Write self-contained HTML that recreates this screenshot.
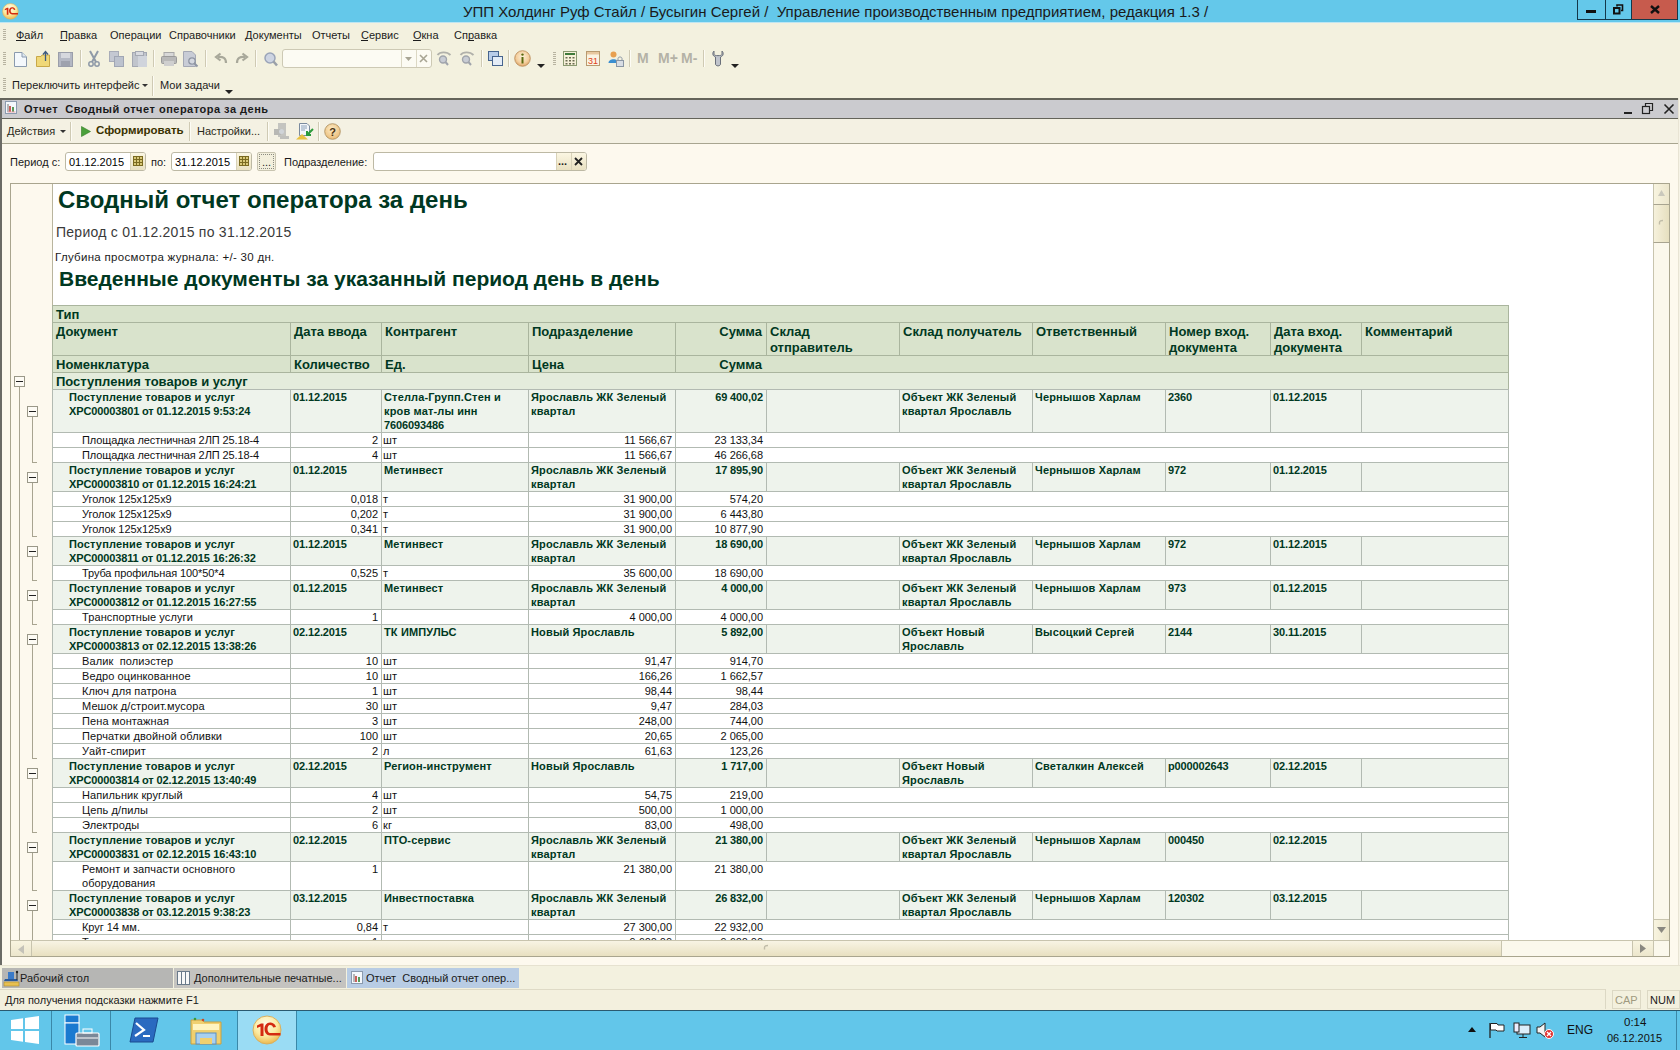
<!DOCTYPE html><html><head><meta charset="utf-8"><style>
html,body{margin:0;padding:0;width:1680px;height:1050px;overflow:hidden;background:#f3f1df;}
body{position:relative;font-family:"Liberation Sans",sans-serif;}
div{position:absolute;box-sizing:border-box;}
.t{white-space:pre;}
svg{position:absolute;overflow:visible}
</style></head><body>
<div style="left:0px;top:0px;width:1680px;height:23px;background:#64c8ea;"></div>
<div style="left:0px;top:22px;width:1680px;height:1px;background:#bfe6f2;"></div>
<div style="left:463px;top:2px;font-size:15px;line-height:19px;color:#1a1a1a;white-space:pre;">УПП Холдинг Руф Стайл / Бусыгин Сергей /  Управление производственным предприятием, редакция 1.3 /</div>
<svg style="left:2px;top:3px" width="16.8" height="16.8" viewBox="0 0 30 30"><defs><radialGradient id="lg1" cx="0.45" cy="0.3" r="0.75"><stop offset="0" stop-color="#fffce8"/><stop offset="0.55" stop-color="#fbeaa0"/><stop offset="1" stop-color="#eab040"/></radialGradient></defs><circle cx="15" cy="15" r="14" fill="url(#lg1)" stroke="#d8b060" stroke-width="1"/><path d="M5 10.5 L9 8.5 H11.5 V21 H8.5 V11.5 L5 13 Z" fill="#d42a10"/><path d="M24 12 C23 8.5 20 7.5 18 7.5 C14.5 7.5 12.5 10.5 12.5 14 C12.5 17.5 14.5 20.5 18 20.5 H28.5 V18 H18 C16.5 18 15.5 16 15.5 14 C15.5 12 16.5 10 18 10 C19.5 10 20.8 10.8 21.2 12.5 Z" fill="#d42a10"/></svg>
<div style="left:1577px;top:0px;width:101px;height:20px;background:#64c8ea;border:1px solid #14384a;border-top:none;"></div>
<div style="left:1632px;top:0px;width:45px;height:19px;background:#c75b4d;"></div>
<div style="left:1605px;top:0px;width:1px;height:19px;background:#14384a;"></div>
<div style="left:1631px;top:0px;width:1px;height:19px;background:#14384a;"></div>
<div style="left:1586px;top:10px;width:10px;height:3px;background:#111;"></div>
<svg style="left:1613px;top:4px" width="11" height="11"><rect x="1" y="4" width="5.5" height="5.5" fill="none" stroke="#111" stroke-width="2"/><path d="M4 2.5 V1 H9.5 V6.5 H8" fill="none" stroke="#111" stroke-width="1.6"/></svg>
<svg style="left:1650px;top:5px" width="10" height="9"><path d="M1 1 L9 8 M9 1 L1 8" stroke="#111" stroke-width="2.4"/></svg>
<div style="left:0px;top:23px;width:1680px;height:76px;background:#f3f1df;"></div>
<div style="left:3px;top:29px;width:3px;height:1px;background:#b7b3a0;"></div>
<div style="left:3px;top:31px;width:3px;height:1px;background:#b7b3a0;"></div>
<div style="left:3px;top:33px;width:3px;height:1px;background:#b7b3a0;"></div>
<div style="left:3px;top:35px;width:3px;height:1px;background:#b7b3a0;"></div>
<div style="left:3px;top:37px;width:3px;height:1px;background:#b7b3a0;"></div>
<div style="left:3px;top:39px;width:3px;height:1px;background:#b7b3a0;"></div>
<div style="left:3px;top:52px;width:3px;height:1px;background:#b7b3a0;"></div>
<div style="left:3px;top:54px;width:3px;height:1px;background:#b7b3a0;"></div>
<div style="left:3px;top:56px;width:3px;height:1px;background:#b7b3a0;"></div>
<div style="left:3px;top:58px;width:3px;height:1px;background:#b7b3a0;"></div>
<div style="left:3px;top:60px;width:3px;height:1px;background:#b7b3a0;"></div>
<div style="left:3px;top:62px;width:3px;height:1px;background:#b7b3a0;"></div>
<div style="left:3px;top:64px;width:3px;height:1px;background:#b7b3a0;"></div>
<div style="left:3px;top:78px;width:3px;height:1px;background:#b7b3a0;"></div>
<div style="left:3px;top:80px;width:3px;height:1px;background:#b7b3a0;"></div>
<div style="left:3px;top:82px;width:3px;height:1px;background:#b7b3a0;"></div>
<div style="left:3px;top:84px;width:3px;height:1px;background:#b7b3a0;"></div>
<div style="left:3px;top:86px;width:3px;height:1px;background:#b7b3a0;"></div>
<div style="left:3px;top:88px;width:3px;height:1px;background:#b7b3a0;"></div>
<div style="left:3px;top:90px;width:3px;height:1px;background:#b7b3a0;"></div>
<div class="t" style="left:16px;top:28px;font-size:11px;line-height:14px;color:#1c1c1c;font-weight:normal;text-align:left;">Файл</div>
<div class="t" style="left:60px;top:28px;font-size:11px;line-height:14px;color:#1c1c1c;font-weight:normal;text-align:left;">Правка</div>
<div class="t" style="left:110px;top:28px;font-size:11px;line-height:14px;color:#1c1c1c;font-weight:normal;text-align:left;">Операции</div>
<div class="t" style="left:169px;top:28px;font-size:11px;line-height:14px;color:#1c1c1c;font-weight:normal;text-align:left;">Справочники</div>
<div class="t" style="left:245px;top:28px;font-size:11px;line-height:14px;color:#1c1c1c;font-weight:normal;text-align:left;">Документы</div>
<div class="t" style="left:312px;top:28px;font-size:11px;line-height:14px;color:#1c1c1c;font-weight:normal;text-align:left;">Отчеты</div>
<div class="t" style="left:361px;top:28px;font-size:11px;line-height:14px;color:#1c1c1c;font-weight:normal;text-align:left;">Сервис</div>
<div class="t" style="left:413px;top:28px;font-size:11px;line-height:14px;color:#1c1c1c;font-weight:normal;text-align:left;">Окна</div>
<div class="t" style="left:454px;top:28px;font-size:11px;line-height:14px;color:#1c1c1c;font-weight:normal;text-align:left;">Справка</div>
<div style="left:16px;top:40px;width:10px;height:1px;background:#1c1c1c;"></div>
<div style="left:60px;top:40px;width:7px;height:1px;background:#1c1c1c;"></div>
<div style="left:361px;top:40px;width:7px;height:1px;background:#1c1c1c;"></div>
<div style="left:413px;top:40px;width:8px;height:1px;background:#1c1c1c;"></div>
<div style="left:468px;top:40px;width:6px;height:1px;background:#1c1c1c;"></div>
<svg style="left:14px;top:52px" width="13" height="15"><path d="M0.5 0.5 H8 L12.5 5 V14.5 H0.5 Z" fill="#f4f8fc" stroke="#8a9aae"/><path d="M8 0.5 V5 H12.5" fill="#dfe8f2" stroke="#8a9aae"/></svg>
<svg style="left:36px;top:50px" width="15" height="17"><path d="M0.5 6.5 H5 L6 5 H13.5 V16.5 H0.5 Z" fill="#f0d878" stroke="#c8a848"/><path d="M9.5 11 V2 M7 4.5 L9.5 1.5 L12 4.5" stroke="#3d5a80" stroke-width="1.3" fill="none"/></svg>
<svg style="left:58px;top:52px" width="15" height="15"><rect x="0.5" y="0.5" width="14" height="14" fill="#b4b8c4" stroke="#9a9eaa"/><rect x="3" y="1" width="9" height="5" fill="#d6d8de"/><rect x="3" y="9" width="9" height="5" fill="#9ea2ae"/></svg>
<div style="left:80px;top:50px;width:1px;height:17px;background:#cfcab4;"></div>
<div style="left:81px;top:50px;width:1px;height:17px;background:#fdfcf5;"></div>
<svg style="left:88px;top:51px" width="12" height="16"><path d="M2 0 L8 11 M10 0 L4 11" stroke="#8f9aa8" stroke-width="2"/><circle cx="3" cy="13" r="2.2" fill="none" stroke="#8f9aa8" stroke-width="1.5"/><circle cx="9" cy="13" r="2.2" fill="none" stroke="#8f9aa8" stroke-width="1.5"/></svg>
<svg style="left:109px;top:51px" width="16" height="16"><rect x="0.5" y="0.5" width="9" height="10" fill="#c4c8d2" stroke="#a8acb8"/><rect x="5.5" y="5.5" width="9" height="10" fill="#bcc2ce" stroke="#a0a6b4"/></svg>
<svg style="left:132px;top:51px" width="16" height="16"><rect x="0.5" y="1.5" width="14" height="14" fill="#c0c4cc" stroke="#a4a8b2"/><rect x="3.5" y="0.5" width="8" height="4" fill="#d8dae0" stroke="#a4a8b2"/><rect x="6" y="5" width="9" height="11" fill="#d0d4dc"/></svg>
<div style="left:153px;top:50px;width:1px;height:17px;background:#cfcab4;"></div>
<div style="left:154px;top:50px;width:1px;height:17px;background:#fdfcf5;"></div>
<svg style="left:161px;top:52px" width="16" height="14"><rect x="3" y="0.5" width="10" height="5" fill="#d8d8d8" stroke="#a8a8a8"/><rect x="0.5" y="4.5" width="15" height="7" rx="1" fill="#b8b8b8" stroke="#9a9a9a"/><rect x="3" y="9" width="10" height="5" fill="#cfcfcf"/></svg>
<svg style="left:183px;top:51px" width="16" height="16"><path d="M0.5 0.5 H9 L12.5 4 V15.5 H0.5 Z" fill="#c8ccd6" stroke="#a4a8b4"/><circle cx="9" cy="10" r="3.2" fill="#d4d8e0" stroke="#8f96a4" stroke-width="1.3"/><path d="M11 12 L14.5 15.5" stroke="#8f96a4" stroke-width="2"/></svg>
<div style="left:205px;top:50px;width:1px;height:17px;background:#cfcab4;"></div>
<div style="left:206px;top:50px;width:1px;height:17px;background:#fdfcf5;"></div>
<svg style="left:215px;top:53px" width="12" height="11"><path d="M11 10 C11 5 8 3.5 3 4 M5.5 0.5 L1 4 L5.5 7.5" stroke="#a8a89a" stroke-width="2.2" fill="none"/></svg>
<svg style="left:236px;top:53px" width="12" height="11"><path d="M1 10 C1 5 4 3.5 9 4 M6.5 0.5 L11 4 L6.5 7.5" stroke="#a8a89a" stroke-width="2.2" fill="none"/></svg>
<div style="left:255px;top:50px;width:1px;height:17px;background:#cfcab4;"></div>
<div style="left:256px;top:50px;width:1px;height:17px;background:#fdfcf5;"></div>
<svg style="left:264px;top:52px" width="14" height="15"><circle cx="6" cy="6" r="5" fill="#cdd4e2" stroke="#9aa4b8" stroke-width="1.5"/><path d="M9.5 9.5 L13 13.5" stroke="#9aa0a8" stroke-width="2.5"/></svg>
<div style="left:282px;top:49px;width:150px;height:19px;background:#fcfbf3;border:1px solid #cdc9b4;border-radius:3px;"></div>
<div style="left:401px;top:50px;width:1px;height:17px;background:#dcd8c4;"></div>
<div style="left:416px;top:50px;width:1px;height:17px;background:#dcd8c4;"></div>
<svg style="left:405px;top:57px" width="8" height="4"><path d="M0 0 H7 L3.5 4 Z" fill="#a8a594"/></svg>
<svg style="left:419px;top:54px" width="9" height="9"><path d="M1 1 L8 8 M8 1 L1 8" stroke="#a8a594" stroke-width="1.6"/></svg>
<svg style="left:436px;top:51px" width="16" height="16"><path d="M1.5 4 C4 0.5 11 0.5 14.5 4" stroke="#b0b0aa" stroke-width="1.8" fill="none"/><circle cx="7" cy="8.5" r="3.5" fill="#c8ccd4" stroke="#a0a4ac" stroke-width="1.4"/><path d="M9.5 11 L12 14" stroke="#a0a4ac" stroke-width="2"/></svg>
<svg style="left:459px;top:51px" width="16" height="16"><path d="M1.5 4 C4 0.5 11 0.5 14.5 4" stroke="#b0b0aa" stroke-width="1.8" fill="none"/><circle cx="7" cy="8.5" r="3.5" fill="#c8ccd4" stroke="#a0a4ac" stroke-width="1.4"/><path d="M9.5 11 L12 14" stroke="#a0a4ac" stroke-width="2"/></svg>
<div style="left:481px;top:50px;width:1px;height:17px;background:#cfcab4;"></div>
<div style="left:482px;top:50px;width:1px;height:17px;background:#fdfcf5;"></div>
<svg style="left:488px;top:51px" width="15" height="15"><rect x="0.5" y="0.5" width="10" height="9" fill="#b8cce8" stroke="#46648e"/><rect x="4.5" y="5.5" width="10" height="9" fill="#e4ecf6" stroke="#46648e"/></svg>
<div style="left:508px;top:50px;width:1px;height:17px;background:#cfcab4;"></div>
<div style="left:509px;top:50px;width:1px;height:17px;background:#fdfcf5;"></div>
<svg style="left:514px;top:50px" width="17" height="17"><defs><radialGradient id="ig" cx="0.5" cy="0.4" r="0.65"><stop offset="0" stop-color="#fbf0d8"/><stop offset="0.6" stop-color="#f4d0a0"/><stop offset="1" stop-color="#d89a58"/></radialGradient></defs><circle cx="8.5" cy="8.5" r="7.8" fill="url(#ig)" stroke="#b88a58" stroke-width="0.8"/><rect x="7.5" y="7" width="2" height="6.5" fill="#5a6a10"/><circle cx="8.5" cy="4.6" r="1.2" fill="#5a6a10"/></svg>
<svg style="left:537px;top:64px" width="8" height="4"><path d="M0 0 H8 L4 4 Z" fill="#222"/></svg>
<div style="left:553px;top:52px;width:3px;height:1px;background:#b7b3a0;"></div>
<div style="left:553px;top:54px;width:3px;height:1px;background:#b7b3a0;"></div>
<div style="left:553px;top:56px;width:3px;height:1px;background:#b7b3a0;"></div>
<div style="left:553px;top:58px;width:3px;height:1px;background:#b7b3a0;"></div>
<div style="left:553px;top:60px;width:3px;height:1px;background:#b7b3a0;"></div>
<div style="left:553px;top:62px;width:3px;height:1px;background:#b7b3a0;"></div>
<div style="left:553px;top:64px;width:3px;height:1px;background:#b7b3a0;"></div>
<svg style="left:563px;top:51px" width="14" height="15"><rect x="0.5" y="0.5" width="13" height="14" fill="#f6f0d8" stroke="#8a9a70"/><rect x="2" y="2" width="10" height="2" fill="#3f7a3a"/><g fill="#6a6a50"><rect x="2.5" y="6" width="2" height="1.5"/><rect x="6" y="6" width="2" height="1.5"/><rect x="9.5" y="6" width="2" height="1.5"/><rect x="2.5" y="9" width="2" height="1.5"/><rect x="6" y="9" width="2" height="1.5"/><rect x="9.5" y="9" width="2" height="1.5"/><rect x="2.5" y="12" width="2" height="1.5"/><rect x="6" y="12" width="2" height="1.5"/><rect x="9.5" y="12" width="2" height="1.5"/></g></svg>
<svg style="left:586px;top:51px" width="14" height="15"><rect x="0.5" y="0.5" width="13" height="14" fill="#faf4e4" stroke="#b89a70"/><rect x="1" y="1" width="12" height="2.5" fill="#e8c8a0"/><text x="2" y="13" font-family="Liberation Sans" font-size="9" fill="#e04020">31</text></svg>
<svg style="left:608px;top:51px" width="16" height="16"><circle cx="5.5" cy="3.5" r="3" fill="#e8a050"/><path d="M0.5 12 C0.5 7 10.5 7 10.5 12 Z" fill="#3a8ed0"/><rect x="8.5" y="9.5" width="7" height="6" fill="#d8dde4" stroke="#8a96a4"/><path d="M10 9.5 V7.5 C10 5.5 14 5.5 14 7.5 V9.5" stroke="#8a96a4" fill="none"/></svg>
<div style="left:629px;top:50px;width:1px;height:17px;background:#cfcab4;"></div>
<div style="left:630px;top:50px;width:1px;height:17px;background:#fdfcf5;"></div>
<div class="t" style="left:637px;top:50px;font-size:14px;line-height:17px;font-weight:bold;color:#b4b2a6;">M</div>
<div class="t" style="left:658px;top:50px;font-size:14px;line-height:17px;font-weight:bold;color:#b4b2a6;">M+</div>
<div class="t" style="left:681px;top:50px;font-size:14px;line-height:17px;font-weight:bold;color:#b4b2a6;">M-</div>
<div style="left:703px;top:50px;width:1px;height:17px;background:#cfcab4;"></div>
<div style="left:704px;top:50px;width:1px;height:17px;background:#fdfcf5;"></div>
<svg style="left:712px;top:50px" width="12" height="17"><path d="M2 1 C0 3 0.5 6 3.5 7 V14 C3.5 16.5 8.5 16.5 8.5 14 V7 C11.5 6 12 3 10 1 V4.5 C10 6 2 6 2 4.5 Z" fill="#c0c4cc" stroke="#6a707a"/></svg>
<svg style="left:731px;top:64px" width="8" height="4"><path d="M0 0 H8 L4 4 Z" fill="#222"/></svg>
<div class="t" style="left:12px;top:78px;font-size:11px;line-height:14px;color:#1c1c1c;font-weight:normal;text-align:left;">Переключить интерфейс</div>
<svg style="left:142px;top:84px" width="6" height="3"><path d="M0 0 H6 L3 3 Z" fill="#333"/></svg>
<div style="left:152px;top:76px;width:1px;height:20px;background:#cfcab4;"></div>
<div style="left:153px;top:76px;width:1px;height:20px;background:#fdfcf5;"></div>
<div class="t" style="left:160px;top:78px;font-size:11px;line-height:14px;color:#1c1c1c;font-weight:normal;text-align:left;">Мои задачи</div>
<svg style="left:225px;top:90px" width="8" height="4"><path d="M0 0 H8 L4 4 Z" fill="#222"/></svg>
<div style="left:0px;top:98px;width:1680px;height:868px;background:#fdf9ee;"></div>
<div style="left:0px;top:98px;width:2px;height:868px;background:#6b6b66;"></div>
<div style="left:1678px;top:98px;width:2px;height:868px;background:#f6f3e6;border-left:1px solid #e8e4d4;"></div>
<div style="left:0px;top:98px;width:1678px;height:2px;background:#64645a;"></div>
<div style="left:2px;top:100px;width:1676px;height:18px;background:#cbcbcf;"></div>
<div style="left:2px;top:118px;width:1676px;height:1px;background:#64645a;"></div>
<svg style="left:5px;top:101px" width="12" height="13"><rect x="0.5" y="0.5" width="11" height="12" fill="#f4f8fc" stroke="#8a9aae"/><rect x="2.5" y="3" width="1" height="8" fill="#777"/><rect x="4" y="5" width="2" height="6" fill="#c8605a"/><rect x="7" y="6" width="2" height="5" fill="#5a9a5a"/><rect x="2.5" y="10.5" width="8" height="1" fill="#e8a0a8"/></svg>
<div class="t" style="left:24px;top:102px;font-size:11px;line-height:14px;color:#1a1a1a;font-weight:bold;text-align:left;letter-spacing:0.5px;">Отчет  Сводный отчет оператора за день</div>
<div style="left:1624px;top:112px;width:8px;height:2px;background:#222;"></div>
<svg style="left:1642px;top:103px" width="11" height="11"><rect x="0.5" y="3.5" width="7" height="7" fill="none" stroke="#222" stroke-width="1.2"/><path d="M3.5 3.5 V0.5 H10.5 V7.5 H7.5" fill="none" stroke="#222" stroke-width="1.2"/></svg>
<svg style="left:1664px;top:104px" width="10" height="10"><path d="M0.5 0.5 L9.5 9.5 M9.5 0.5 L0.5 9.5" stroke="#222" stroke-width="1.6"/></svg>
<div style="left:2px;top:119px;width:1676px;height:24px;background:#f4f1e3;"></div>
<div style="left:2px;top:143px;width:1676px;height:1px;background:#a8a590;"></div>
<div class="t" style="left:7px;top:124px;font-size:11px;line-height:14px;color:#2a2a1a;font-weight:normal;text-align:left;">Действия</div>
<svg style="left:60px;top:130px" width="6" height="3"><path d="M0 0 H6 L3 3 Z" fill="#333"/></svg>
<div style="left:70px;top:122px;width:1px;height:19px;background:#cfcab4;"></div>
<div style="left:71px;top:122px;width:1px;height:19px;background:#fdfcf5;"></div>
<svg style="left:81px;top:126px" width="10" height="11"><path d="M0.5 0.5 L9.5 5.5 L0.5 10.5 Z" fill="#4aa03a" stroke="#2e7a22" stroke-width="0.6"/></svg>
<div class="t" style="left:96px;top:123px;font-size:11.5px;line-height:15px;color:#3a3200;font-weight:bold;text-align:left;">Сформировать</div>
<div style="left:189px;top:122px;width:1px;height:19px;background:#cfcab4;"></div>
<div style="left:190px;top:122px;width:1px;height:19px;background:#fdfcf5;"></div>
<div class="t" style="left:197px;top:124px;font-size:11px;line-height:14px;color:#2a2a1a;font-weight:normal;text-align:left;">Настройки...</div>
<div style="left:267px;top:122px;width:1px;height:19px;background:#cfcab4;"></div>
<div style="left:268px;top:122px;width:1px;height:19px;background:#fdfcf5;"></div>
<svg style="left:274px;top:123px" width="16" height="16"><rect x="4" y="0" width="8" height="14" fill="#c4c4c0"/><rect x="0" y="6" width="7" height="6" fill="#b8b8b4"/><rect x="6" y="13" width="9" height="3" fill="#c0c0bc"/><circle cx="7.5" cy="8.5" r="2.5" fill="#d0d4d8"/></svg>
<svg style="left:296px;top:123px" width="18" height="17"><path d="M3.5 0.5 H11 L13.5 3 V12.5 H3.5 Z" fill="#f4f6fa" stroke="#7a8a9e"/><path d="M5 3 H11 M5 5 H11 M5 7 H9" stroke="#8aa0b8"/><path d="M0 16.5 L6 11 L12 16.5 Z" fill="#e8c040"/><path d="M17 6 L11 12 M11 8 V12 H15" stroke="#2a9a3a" stroke-width="2" fill="none"/></svg>
<div style="left:318px;top:122px;width:1px;height:19px;background:#cfcab4;"></div>
<div style="left:319px;top:122px;width:1px;height:19px;background:#fdfcf5;"></div>
<svg style="left:324px;top:123px" width="17" height="17"><defs><radialGradient id="hg" cx="0.45" cy="0.35" r="0.7"><stop offset="0" stop-color="#fcecc8"/><stop offset="1" stop-color="#eab870"/></radialGradient></defs><circle cx="8.5" cy="8.5" r="7.8" fill="url(#hg)" stroke="#a88a58" stroke-width="0.8"/><text x="5.2" y="13" font-family="Liberation Sans" font-weight="bold" font-size="11" fill="#4a3010">?</text></svg>
<div class="t" style="left:10px;top:155px;font-size:11px;line-height:14px;color:#1a1a1a;font-weight:normal;text-align:left;">Период с:</div>
<div style="left:65px;top:152px;width:81px;height:19px;background:#ffffff;border:1px solid #bdb9a4;border-radius:3px;"></div>
<div class="t" style="left:69px;top:155px;font-size:11px;line-height:14px;color:#000;font-weight:normal;text-align:left;">01.12.2015</div>
<div style="left:130px;top:153px;width:15px;height:17px;background:linear-gradient(#fbf6e2,#e9e1c2);border-left:1px solid #d8d2b8;border-radius:0 2px 2px 0;"></div>
<svg style="left:133px;top:156px" width="10" height="10"><rect x="0.5" y="0.5" width="9" height="9" fill="#d8c878" stroke="#7a6a20"/><path d="M0.5 3.5 H9.5 M0.5 6.5 H9.5 M3.5 0.5 V9.5 M6.5 0.5 V9.5" stroke="#7a6a20" stroke-width="1"/></svg>
<div class="t" style="left:151px;top:155px;font-size:11px;line-height:14px;color:#1a1a1a;font-weight:normal;text-align:left;">по:</div>
<div style="left:171px;top:152px;width:81px;height:19px;background:#ffffff;border:1px solid #bdb9a4;border-radius:3px;"></div>
<div class="t" style="left:175px;top:155px;font-size:11px;line-height:14px;color:#000;font-weight:normal;text-align:left;">31.12.2015</div>
<div style="left:236px;top:153px;width:15px;height:17px;background:linear-gradient(#fbf6e2,#e9e1c2);border-left:1px solid #d8d2b8;border-radius:0 2px 2px 0;"></div>
<svg style="left:239px;top:156px" width="10" height="10"><rect x="0.5" y="0.5" width="9" height="9" fill="#d8c878" stroke="#7a6a20"/><path d="M0.5 3.5 H9.5 M0.5 6.5 H9.5 M3.5 0.5 V9.5 M6.5 0.5 V9.5" stroke="#7a6a20" stroke-width="1"/></svg>
<div style="left:257px;top:152px;width:19px;height:19px;background:#f3efdc;border:1px solid #c8c4b0;border-radius:2px;"></div>
<div style="left:259px;top:154px;width:15px;height:15px;border:1px dotted #8a8a80;"></div>
<div class="t" style="left:262px;top:155px;font-size:11px;line-height:14px;color:#222;font-weight:normal;text-align:left;">...</div>
<div class="t" style="left:284px;top:155px;font-size:11px;line-height:14px;color:#1a1a1a;font-weight:normal;text-align:left;">Подразделение:</div>
<div style="left:373px;top:152px;width:214px;height:19px;background:#ffffff;border:1px solid #bdb9a4;border-radius:3px;"></div>
<div style="left:556px;top:153px;width:30px;height:17px;background:linear-gradient(#fbf6e2,#e9e1c2);border-left:1px solid #d8d2b8;border-radius:0 2px 2px 0;"></div>
<div style="left:571px;top:153px;width:1px;height:17px;background:#d8d2b8;"></div>
<div class="t" style="left:558px;top:154px;font-size:11px;line-height:14px;color:#222;font-weight:bold;text-align:left;">...</div>
<svg style="left:574px;top:157px" width="9" height="9"><path d="M1 1 L8 8 M8 1 L1 8" stroke="#222" stroke-width="1.8"/></svg>
<div style="left:10px;top:183px;width:1660px;height:774px;border:1px solid #a9a58e;background:#ffffff;"></div>
<div style="left:11px;top:184px;width:42px;height:756px;background:#fdf9ee;border-right:1px solid #b9b59e;"></div>
<div style="left:0;top:0;width:1653px;height:940px;overflow:hidden;">
<div class="t" style="left:58px;top:186px;font-size:24px;line-height:28px;color:#003822;font-weight:bold;text-align:left;">Сводный отчет оператора за день</div>
<div class="t" style="left:56px;top:224px;font-size:14px;line-height:17px;color:#3a3a3a;font-weight:normal;text-align:left;letter-spacing:0.25px;">Период с 01.12.2015 по 31.12.2015</div>
<div class="t" style="left:55px;top:250px;font-size:11.5px;line-height:14px;color:#1a1a1a;font-weight:normal;text-align:left;letter-spacing:0.3px;">Глубина просмотра журнала: +/- 30 дн.</div>
<div class="t" style="left:59px;top:267px;font-size:21px;line-height:24px;color:#003822;font-weight:bold;text-align:left;">Введенные документы за указанный период день в день</div>
<div style="left:53px;top:305px;width:1456px;height:67px;background:#d9e3cc;"></div>
<div style="left:52px;top:305px;width:1457px;height:1px;background:#aab59e;"></div>
<div style="left:52px;top:322px;width:1457px;height:1px;background:#aab59e;"></div>
<div style="left:52px;top:355px;width:1457px;height:1px;background:#aab59e;"></div>
<div style="left:52px;top:372px;width:1457px;height:1px;background:#aab59e;"></div>
<div style="left:52px;top:305px;width:1px;height:85px;background:#aab59e;"></div>
<div style="left:1508px;top:305px;width:1px;height:85px;background:#aab59e;"></div>
<div style="left:290px;top:322px;width:1px;height:34px;background:#aab59e;"></div>
<div style="left:381px;top:322px;width:1px;height:34px;background:#aab59e;"></div>
<div style="left:528px;top:322px;width:1px;height:34px;background:#aab59e;"></div>
<div style="left:675px;top:322px;width:1px;height:34px;background:#aab59e;"></div>
<div style="left:766px;top:322px;width:1px;height:34px;background:#aab59e;"></div>
<div style="left:899px;top:322px;width:1px;height:34px;background:#aab59e;"></div>
<div style="left:1032px;top:322px;width:1px;height:34px;background:#aab59e;"></div>
<div style="left:1165px;top:322px;width:1px;height:34px;background:#aab59e;"></div>
<div style="left:1270px;top:322px;width:1px;height:34px;background:#aab59e;"></div>
<div style="left:1361px;top:322px;width:1px;height:34px;background:#aab59e;"></div>
<div style="left:290px;top:355px;width:1px;height:18px;background:#aab59e;"></div>
<div style="left:381px;top:355px;width:1px;height:18px;background:#aab59e;"></div>
<div style="left:528px;top:355px;width:1px;height:18px;background:#aab59e;"></div>
<div style="left:675px;top:355px;width:1px;height:18px;background:#aab59e;"></div>
<div class="t" style="left:56px;top:307px;font-size:13px;line-height:16px;color:#003822;font-weight:bold;">Тип</div>
<div class="t" style="left:56px;top:324px;font-size:13px;line-height:16px;color:#003822;font-weight:bold;">Документ</div>
<div class="t" style="left:294px;top:324px;font-size:13px;line-height:16px;color:#003822;font-weight:bold;">Дата ввода</div>
<div class="t" style="left:385px;top:324px;font-size:13px;line-height:16px;color:#003822;font-weight:bold;">Контрагент</div>
<div class="t" style="left:532px;top:324px;font-size:13px;line-height:16px;color:#003822;font-weight:bold;">Подразделение</div>
<div class="t" style="left:676px;top:324px;width:86px;font-size:13px;line-height:16px;color:#003822;font-weight:bold;text-align:right;">Сумма</div>
<div class="t" style="left:770px;top:324px;font-size:13px;line-height:16px;color:#003822;font-weight:bold;">Склад
отправитель</div>
<div class="t" style="left:903px;top:324px;font-size:13px;line-height:16px;color:#003822;font-weight:bold;">Склад получатель</div>
<div class="t" style="left:1036px;top:324px;font-size:13px;line-height:16px;color:#003822;font-weight:bold;">Ответственный</div>
<div class="t" style="left:1169px;top:324px;font-size:13px;line-height:16px;color:#003822;font-weight:bold;">Номер вход.
документа</div>
<div class="t" style="left:1274px;top:324px;font-size:13px;line-height:16px;color:#003822;font-weight:bold;">Дата вход.
документа</div>
<div class="t" style="left:1365px;top:324px;font-size:13px;line-height:16px;color:#003822;font-weight:bold;">Комментарий</div>
<div class="t" style="left:56px;top:357px;font-size:13px;line-height:16px;color:#003822;font-weight:bold;">Номенклатура</div>
<div class="t" style="left:294px;top:357px;font-size:13px;line-height:16px;color:#003822;font-weight:bold;">Количество</div>
<div class="t" style="left:385px;top:357px;font-size:13px;line-height:16px;color:#003822;font-weight:bold;">Ед.</div>
<div class="t" style="left:532px;top:357px;font-size:13px;line-height:16px;color:#003822;font-weight:bold;">Цена</div>
<div class="t" style="left:676px;top:357px;width:86px;font-size:13px;line-height:16px;color:#003822;font-weight:bold;text-align:right;">Сумма</div>
<div style="left:53px;top:373px;width:1455px;height:16px;background:#e4ecdc;"></div>
<div class="t" style="left:56px;top:374px;font-size:13px;line-height:16px;color:#003822;font-weight:bold;">Поступления товаров и услуг</div>
<div style="left:52px;top:389px;width:1457px;height:1px;background:#b2bab2;"></div>
<div style="left:53px;top:390px;width:1455px;height:42px;background:#eef3ec;"></div>
<div style="left:290px;top:389px;width:1px;height:44px;background:#b2bab2;"></div>
<div style="left:381px;top:389px;width:1px;height:44px;background:#b2bab2;"></div>
<div style="left:528px;top:389px;width:1px;height:44px;background:#b2bab2;"></div>
<div style="left:675px;top:389px;width:1px;height:44px;background:#b2bab2;"></div>
<div style="left:766px;top:389px;width:1px;height:44px;background:#b2bab2;"></div>
<div style="left:899px;top:389px;width:1px;height:44px;background:#b2bab2;"></div>
<div style="left:1032px;top:389px;width:1px;height:44px;background:#b2bab2;"></div>
<div style="left:1165px;top:389px;width:1px;height:44px;background:#b2bab2;"></div>
<div style="left:1270px;top:389px;width:1px;height:44px;background:#b2bab2;"></div>
<div style="left:1361px;top:389px;width:1px;height:44px;background:#b2bab2;"></div>
<div style="left:52px;top:389px;width:1px;height:44px;background:#b2bab2;"></div>
<div style="left:1508px;top:389px;width:1px;height:44px;background:#b2bab2;"></div>
<div style="left:52px;top:432px;width:1457px;height:1px;background:#b2bab2;"></div>
<div class="t" style="left:69px;top:390px;font-size:11px;line-height:14px;color:#003822;font-weight:bold;"><span style="letter-spacing:0.15px">Поступление товаров и услуг</span>
<span style="letter-spacing:-0.13px">XPC00003801 от 01.12.2015 9:53:24</span></div>
<div class="t" style="left:293px;top:390px;font-size:11px;line-height:14px;color:#003822;font-weight:bold;"><span style="letter-spacing:-0.13px">01.12.2015</span></div>
<div class="t" style="left:384px;top:390px;font-size:11px;line-height:14px;color:#003822;font-weight:bold;"><span style="letter-spacing:0.15px">Стелла-Групп.Стен и</span>
<span style="letter-spacing:0.15px">кров мат-лы инн</span>
<span style="letter-spacing:-0.13px">7606093486</span></div>
<div class="t" style="left:531px;top:390px;font-size:11px;line-height:14px;color:#003822;font-weight:bold;"><span style="letter-spacing:0.15px">Ярославль ЖК Зеленый</span>
<span style="letter-spacing:0.15px">квартал</span></div>
<div class="t" style="left:676px;top:390px;width:87px;font-size:11px;line-height:14px;color:#003822;font-weight:bold;text-align:right;"><span style="letter-spacing:-0.13px">69 400,02</span></div>
<div class="t" style="left:902px;top:390px;font-size:11px;line-height:14px;color:#003822;font-weight:bold;"><span style="letter-spacing:0.15px">Объект ЖК Зеленый</span>
<span style="letter-spacing:0.15px">квартал Ярославль</span></div>
<div class="t" style="left:1035px;top:390px;font-size:11px;line-height:14px;color:#003822;font-weight:bold;"><span style="letter-spacing:0.15px">Чернышов Харлам</span></div>
<div class="t" style="left:1168px;top:390px;font-size:11px;line-height:14px;color:#003822;font-weight:bold;"><span style="letter-spacing:-0.13px">2360</span></div>
<div class="t" style="left:1273px;top:390px;font-size:11px;line-height:14px;color:#003822;font-weight:bold;"><span style="letter-spacing:-0.13px">01.12.2015</span></div>
<div style="left:290px;top:432px;width:1px;height:16px;background:#b2bab2;"></div>
<div style="left:381px;top:432px;width:1px;height:16px;background:#b2bab2;"></div>
<div style="left:528px;top:432px;width:1px;height:16px;background:#b2bab2;"></div>
<div style="left:675px;top:432px;width:1px;height:16px;background:#b2bab2;"></div>
<div style="left:52px;top:432px;width:1px;height:16px;background:#b2bab2;"></div>
<div style="left:1508px;top:432px;width:1px;height:16px;background:#b2bab2;"></div>
<div style="left:52px;top:447px;width:1457px;height:1px;background:#b2bab2;"></div>
<div class="t" style="left:82px;top:433px;font-size:11px;line-height:14px;color:#111;font-weight:normal;"><span style="letter-spacing:-0.1px">Площадка лестничная 2ЛП 25.18-4</span></div>
<div class="t" style="left:291px;top:433px;width:87px;font-size:11px;line-height:14px;color:#111;font-weight:normal;text-align:right;"><span style="letter-spacing:-0.05px">2</span></div>
<div class="t" style="left:383px;top:433px;font-size:11px;line-height:14px;color:#111;font-weight:normal;"><span style="letter-spacing:0.1px">шт</span></div>
<div class="t" style="left:529px;top:433px;width:143px;font-size:11px;line-height:14px;color:#111;font-weight:normal;text-align:right;"><span style="letter-spacing:-0.05px">11 566,67</span></div>
<div class="t" style="left:676px;top:433px;width:87px;font-size:11px;line-height:14px;color:#111;font-weight:normal;text-align:right;"><span style="letter-spacing:-0.05px">23 133,34</span></div>
<div style="left:290px;top:447px;width:1px;height:16px;background:#b2bab2;"></div>
<div style="left:381px;top:447px;width:1px;height:16px;background:#b2bab2;"></div>
<div style="left:528px;top:447px;width:1px;height:16px;background:#b2bab2;"></div>
<div style="left:675px;top:447px;width:1px;height:16px;background:#b2bab2;"></div>
<div style="left:52px;top:447px;width:1px;height:16px;background:#b2bab2;"></div>
<div style="left:1508px;top:447px;width:1px;height:16px;background:#b2bab2;"></div>
<div style="left:52px;top:462px;width:1457px;height:1px;background:#b2bab2;"></div>
<div class="t" style="left:82px;top:448px;font-size:11px;line-height:14px;color:#111;font-weight:normal;"><span style="letter-spacing:-0.1px">Площадка лестничная 2ЛП 25.18-4</span></div>
<div class="t" style="left:291px;top:448px;width:87px;font-size:11px;line-height:14px;color:#111;font-weight:normal;text-align:right;"><span style="letter-spacing:-0.05px">4</span></div>
<div class="t" style="left:383px;top:448px;font-size:11px;line-height:14px;color:#111;font-weight:normal;"><span style="letter-spacing:0.1px">шт</span></div>
<div class="t" style="left:529px;top:448px;width:143px;font-size:11px;line-height:14px;color:#111;font-weight:normal;text-align:right;"><span style="letter-spacing:-0.05px">11 566,67</span></div>
<div class="t" style="left:676px;top:448px;width:87px;font-size:11px;line-height:14px;color:#111;font-weight:normal;text-align:right;"><span style="letter-spacing:-0.05px">46 266,68</span></div>
<div style="left:53px;top:463px;width:1455px;height:28px;background:#eef3ec;"></div>
<div style="left:290px;top:462px;width:1px;height:30px;background:#b2bab2;"></div>
<div style="left:381px;top:462px;width:1px;height:30px;background:#b2bab2;"></div>
<div style="left:528px;top:462px;width:1px;height:30px;background:#b2bab2;"></div>
<div style="left:675px;top:462px;width:1px;height:30px;background:#b2bab2;"></div>
<div style="left:766px;top:462px;width:1px;height:30px;background:#b2bab2;"></div>
<div style="left:899px;top:462px;width:1px;height:30px;background:#b2bab2;"></div>
<div style="left:1032px;top:462px;width:1px;height:30px;background:#b2bab2;"></div>
<div style="left:1165px;top:462px;width:1px;height:30px;background:#b2bab2;"></div>
<div style="left:1270px;top:462px;width:1px;height:30px;background:#b2bab2;"></div>
<div style="left:1361px;top:462px;width:1px;height:30px;background:#b2bab2;"></div>
<div style="left:52px;top:462px;width:1px;height:30px;background:#b2bab2;"></div>
<div style="left:1508px;top:462px;width:1px;height:30px;background:#b2bab2;"></div>
<div style="left:52px;top:491px;width:1457px;height:1px;background:#b2bab2;"></div>
<div class="t" style="left:69px;top:463px;font-size:11px;line-height:14px;color:#003822;font-weight:bold;"><span style="letter-spacing:0.15px">Поступление товаров и услуг</span>
<span style="letter-spacing:-0.13px">XPC00003810 от 01.12.2015 16:24:21</span></div>
<div class="t" style="left:293px;top:463px;font-size:11px;line-height:14px;color:#003822;font-weight:bold;"><span style="letter-spacing:-0.13px">01.12.2015</span></div>
<div class="t" style="left:384px;top:463px;font-size:11px;line-height:14px;color:#003822;font-weight:bold;"><span style="letter-spacing:0.15px">Метинвест</span></div>
<div class="t" style="left:531px;top:463px;font-size:11px;line-height:14px;color:#003822;font-weight:bold;"><span style="letter-spacing:0.15px">Ярославль ЖК Зеленый</span>
<span style="letter-spacing:0.15px">квартал</span></div>
<div class="t" style="left:676px;top:463px;width:87px;font-size:11px;line-height:14px;color:#003822;font-weight:bold;text-align:right;"><span style="letter-spacing:-0.13px">17 895,90</span></div>
<div class="t" style="left:902px;top:463px;font-size:11px;line-height:14px;color:#003822;font-weight:bold;"><span style="letter-spacing:0.15px">Объект ЖК Зеленый</span>
<span style="letter-spacing:0.15px">квартал Ярославль</span></div>
<div class="t" style="left:1035px;top:463px;font-size:11px;line-height:14px;color:#003822;font-weight:bold;"><span style="letter-spacing:0.15px">Чернышов Харлам</span></div>
<div class="t" style="left:1168px;top:463px;font-size:11px;line-height:14px;color:#003822;font-weight:bold;"><span style="letter-spacing:-0.13px">972</span></div>
<div class="t" style="left:1273px;top:463px;font-size:11px;line-height:14px;color:#003822;font-weight:bold;"><span style="letter-spacing:-0.13px">01.12.2015</span></div>
<div style="left:290px;top:491px;width:1px;height:16px;background:#b2bab2;"></div>
<div style="left:381px;top:491px;width:1px;height:16px;background:#b2bab2;"></div>
<div style="left:528px;top:491px;width:1px;height:16px;background:#b2bab2;"></div>
<div style="left:675px;top:491px;width:1px;height:16px;background:#b2bab2;"></div>
<div style="left:52px;top:491px;width:1px;height:16px;background:#b2bab2;"></div>
<div style="left:1508px;top:491px;width:1px;height:16px;background:#b2bab2;"></div>
<div style="left:52px;top:506px;width:1457px;height:1px;background:#b2bab2;"></div>
<div class="t" style="left:82px;top:492px;font-size:11px;line-height:14px;color:#111;font-weight:normal;"><span style="letter-spacing:-0.05px">Уголок 125x125x9</span></div>
<div class="t" style="left:291px;top:492px;width:87px;font-size:11px;line-height:14px;color:#111;font-weight:normal;text-align:right;"><span style="letter-spacing:-0.05px">0,018</span></div>
<div class="t" style="left:383px;top:492px;font-size:11px;line-height:14px;color:#111;font-weight:normal;"><span style="letter-spacing:0.1px">т</span></div>
<div class="t" style="left:529px;top:492px;width:143px;font-size:11px;line-height:14px;color:#111;font-weight:normal;text-align:right;"><span style="letter-spacing:-0.05px">31 900,00</span></div>
<div class="t" style="left:676px;top:492px;width:87px;font-size:11px;line-height:14px;color:#111;font-weight:normal;text-align:right;"><span style="letter-spacing:-0.05px">574,20</span></div>
<div style="left:290px;top:506px;width:1px;height:16px;background:#b2bab2;"></div>
<div style="left:381px;top:506px;width:1px;height:16px;background:#b2bab2;"></div>
<div style="left:528px;top:506px;width:1px;height:16px;background:#b2bab2;"></div>
<div style="left:675px;top:506px;width:1px;height:16px;background:#b2bab2;"></div>
<div style="left:52px;top:506px;width:1px;height:16px;background:#b2bab2;"></div>
<div style="left:1508px;top:506px;width:1px;height:16px;background:#b2bab2;"></div>
<div style="left:52px;top:521px;width:1457px;height:1px;background:#b2bab2;"></div>
<div class="t" style="left:82px;top:507px;font-size:11px;line-height:14px;color:#111;font-weight:normal;"><span style="letter-spacing:-0.05px">Уголок 125x125x9</span></div>
<div class="t" style="left:291px;top:507px;width:87px;font-size:11px;line-height:14px;color:#111;font-weight:normal;text-align:right;"><span style="letter-spacing:-0.05px">0,202</span></div>
<div class="t" style="left:383px;top:507px;font-size:11px;line-height:14px;color:#111;font-weight:normal;"><span style="letter-spacing:0.1px">т</span></div>
<div class="t" style="left:529px;top:507px;width:143px;font-size:11px;line-height:14px;color:#111;font-weight:normal;text-align:right;"><span style="letter-spacing:-0.05px">31 900,00</span></div>
<div class="t" style="left:676px;top:507px;width:87px;font-size:11px;line-height:14px;color:#111;font-weight:normal;text-align:right;"><span style="letter-spacing:-0.05px">6 443,80</span></div>
<div style="left:290px;top:521px;width:1px;height:16px;background:#b2bab2;"></div>
<div style="left:381px;top:521px;width:1px;height:16px;background:#b2bab2;"></div>
<div style="left:528px;top:521px;width:1px;height:16px;background:#b2bab2;"></div>
<div style="left:675px;top:521px;width:1px;height:16px;background:#b2bab2;"></div>
<div style="left:52px;top:521px;width:1px;height:16px;background:#b2bab2;"></div>
<div style="left:1508px;top:521px;width:1px;height:16px;background:#b2bab2;"></div>
<div style="left:52px;top:536px;width:1457px;height:1px;background:#b2bab2;"></div>
<div class="t" style="left:82px;top:522px;font-size:11px;line-height:14px;color:#111;font-weight:normal;"><span style="letter-spacing:-0.05px">Уголок 125x125x9</span></div>
<div class="t" style="left:291px;top:522px;width:87px;font-size:11px;line-height:14px;color:#111;font-weight:normal;text-align:right;"><span style="letter-spacing:-0.05px">0,341</span></div>
<div class="t" style="left:383px;top:522px;font-size:11px;line-height:14px;color:#111;font-weight:normal;"><span style="letter-spacing:0.1px">т</span></div>
<div class="t" style="left:529px;top:522px;width:143px;font-size:11px;line-height:14px;color:#111;font-weight:normal;text-align:right;"><span style="letter-spacing:-0.05px">31 900,00</span></div>
<div class="t" style="left:676px;top:522px;width:87px;font-size:11px;line-height:14px;color:#111;font-weight:normal;text-align:right;"><span style="letter-spacing:-0.05px">10 877,90</span></div>
<div style="left:53px;top:537px;width:1455px;height:28px;background:#eef3ec;"></div>
<div style="left:290px;top:536px;width:1px;height:30px;background:#b2bab2;"></div>
<div style="left:381px;top:536px;width:1px;height:30px;background:#b2bab2;"></div>
<div style="left:528px;top:536px;width:1px;height:30px;background:#b2bab2;"></div>
<div style="left:675px;top:536px;width:1px;height:30px;background:#b2bab2;"></div>
<div style="left:766px;top:536px;width:1px;height:30px;background:#b2bab2;"></div>
<div style="left:899px;top:536px;width:1px;height:30px;background:#b2bab2;"></div>
<div style="left:1032px;top:536px;width:1px;height:30px;background:#b2bab2;"></div>
<div style="left:1165px;top:536px;width:1px;height:30px;background:#b2bab2;"></div>
<div style="left:1270px;top:536px;width:1px;height:30px;background:#b2bab2;"></div>
<div style="left:1361px;top:536px;width:1px;height:30px;background:#b2bab2;"></div>
<div style="left:52px;top:536px;width:1px;height:30px;background:#b2bab2;"></div>
<div style="left:1508px;top:536px;width:1px;height:30px;background:#b2bab2;"></div>
<div style="left:52px;top:565px;width:1457px;height:1px;background:#b2bab2;"></div>
<div class="t" style="left:69px;top:537px;font-size:11px;line-height:14px;color:#003822;font-weight:bold;"><span style="letter-spacing:0.15px">Поступление товаров и услуг</span>
<span style="letter-spacing:-0.13px">XPC00003811 от 01.12.2015 16:26:32</span></div>
<div class="t" style="left:293px;top:537px;font-size:11px;line-height:14px;color:#003822;font-weight:bold;"><span style="letter-spacing:-0.13px">01.12.2015</span></div>
<div class="t" style="left:384px;top:537px;font-size:11px;line-height:14px;color:#003822;font-weight:bold;"><span style="letter-spacing:0.15px">Метинвест</span></div>
<div class="t" style="left:531px;top:537px;font-size:11px;line-height:14px;color:#003822;font-weight:bold;"><span style="letter-spacing:0.15px">Ярославль ЖК Зеленый</span>
<span style="letter-spacing:0.15px">квартал</span></div>
<div class="t" style="left:676px;top:537px;width:87px;font-size:11px;line-height:14px;color:#003822;font-weight:bold;text-align:right;"><span style="letter-spacing:-0.13px">18 690,00</span></div>
<div class="t" style="left:902px;top:537px;font-size:11px;line-height:14px;color:#003822;font-weight:bold;"><span style="letter-spacing:0.15px">Объект ЖК Зеленый</span>
<span style="letter-spacing:0.15px">квартал Ярославль</span></div>
<div class="t" style="left:1035px;top:537px;font-size:11px;line-height:14px;color:#003822;font-weight:bold;"><span style="letter-spacing:0.15px">Чернышов Харлам</span></div>
<div class="t" style="left:1168px;top:537px;font-size:11px;line-height:14px;color:#003822;font-weight:bold;"><span style="letter-spacing:-0.13px">972</span></div>
<div class="t" style="left:1273px;top:537px;font-size:11px;line-height:14px;color:#003822;font-weight:bold;"><span style="letter-spacing:-0.13px">01.12.2015</span></div>
<div style="left:290px;top:565px;width:1px;height:16px;background:#b2bab2;"></div>
<div style="left:381px;top:565px;width:1px;height:16px;background:#b2bab2;"></div>
<div style="left:528px;top:565px;width:1px;height:16px;background:#b2bab2;"></div>
<div style="left:675px;top:565px;width:1px;height:16px;background:#b2bab2;"></div>
<div style="left:52px;top:565px;width:1px;height:16px;background:#b2bab2;"></div>
<div style="left:1508px;top:565px;width:1px;height:16px;background:#b2bab2;"></div>
<div style="left:52px;top:580px;width:1457px;height:1px;background:#b2bab2;"></div>
<div class="t" style="left:82px;top:566px;font-size:11px;line-height:14px;color:#111;font-weight:normal;"><span style="letter-spacing:-0.1px">Труба профильная 100*50*4</span></div>
<div class="t" style="left:291px;top:566px;width:87px;font-size:11px;line-height:14px;color:#111;font-weight:normal;text-align:right;"><span style="letter-spacing:-0.05px">0,525</span></div>
<div class="t" style="left:383px;top:566px;font-size:11px;line-height:14px;color:#111;font-weight:normal;"><span style="letter-spacing:0.1px">т</span></div>
<div class="t" style="left:529px;top:566px;width:143px;font-size:11px;line-height:14px;color:#111;font-weight:normal;text-align:right;"><span style="letter-spacing:-0.05px">35 600,00</span></div>
<div class="t" style="left:676px;top:566px;width:87px;font-size:11px;line-height:14px;color:#111;font-weight:normal;text-align:right;"><span style="letter-spacing:-0.05px">18 690,00</span></div>
<div style="left:53px;top:581px;width:1455px;height:28px;background:#eef3ec;"></div>
<div style="left:290px;top:580px;width:1px;height:30px;background:#b2bab2;"></div>
<div style="left:381px;top:580px;width:1px;height:30px;background:#b2bab2;"></div>
<div style="left:528px;top:580px;width:1px;height:30px;background:#b2bab2;"></div>
<div style="left:675px;top:580px;width:1px;height:30px;background:#b2bab2;"></div>
<div style="left:766px;top:580px;width:1px;height:30px;background:#b2bab2;"></div>
<div style="left:899px;top:580px;width:1px;height:30px;background:#b2bab2;"></div>
<div style="left:1032px;top:580px;width:1px;height:30px;background:#b2bab2;"></div>
<div style="left:1165px;top:580px;width:1px;height:30px;background:#b2bab2;"></div>
<div style="left:1270px;top:580px;width:1px;height:30px;background:#b2bab2;"></div>
<div style="left:1361px;top:580px;width:1px;height:30px;background:#b2bab2;"></div>
<div style="left:52px;top:580px;width:1px;height:30px;background:#b2bab2;"></div>
<div style="left:1508px;top:580px;width:1px;height:30px;background:#b2bab2;"></div>
<div style="left:52px;top:609px;width:1457px;height:1px;background:#b2bab2;"></div>
<div class="t" style="left:69px;top:581px;font-size:11px;line-height:14px;color:#003822;font-weight:bold;"><span style="letter-spacing:0.15px">Поступление товаров и услуг</span>
<span style="letter-spacing:-0.13px">XPC00003812 от 01.12.2015 16:27:55</span></div>
<div class="t" style="left:293px;top:581px;font-size:11px;line-height:14px;color:#003822;font-weight:bold;"><span style="letter-spacing:-0.13px">01.12.2015</span></div>
<div class="t" style="left:384px;top:581px;font-size:11px;line-height:14px;color:#003822;font-weight:bold;"><span style="letter-spacing:0.15px">Метинвест</span></div>
<div class="t" style="left:531px;top:581px;font-size:11px;line-height:14px;color:#003822;font-weight:bold;"><span style="letter-spacing:0.15px">Ярославль ЖК Зеленый</span>
<span style="letter-spacing:0.15px">квартал</span></div>
<div class="t" style="left:676px;top:581px;width:87px;font-size:11px;line-height:14px;color:#003822;font-weight:bold;text-align:right;"><span style="letter-spacing:-0.13px">4 000,00</span></div>
<div class="t" style="left:902px;top:581px;font-size:11px;line-height:14px;color:#003822;font-weight:bold;"><span style="letter-spacing:0.15px">Объект ЖК Зеленый</span>
<span style="letter-spacing:0.15px">квартал Ярославль</span></div>
<div class="t" style="left:1035px;top:581px;font-size:11px;line-height:14px;color:#003822;font-weight:bold;"><span style="letter-spacing:0.15px">Чернышов Харлам</span></div>
<div class="t" style="left:1168px;top:581px;font-size:11px;line-height:14px;color:#003822;font-weight:bold;"><span style="letter-spacing:-0.13px">973</span></div>
<div class="t" style="left:1273px;top:581px;font-size:11px;line-height:14px;color:#003822;font-weight:bold;"><span style="letter-spacing:-0.13px">01.12.2015</span></div>
<div style="left:290px;top:609px;width:1px;height:16px;background:#b2bab2;"></div>
<div style="left:381px;top:609px;width:1px;height:16px;background:#b2bab2;"></div>
<div style="left:528px;top:609px;width:1px;height:16px;background:#b2bab2;"></div>
<div style="left:675px;top:609px;width:1px;height:16px;background:#b2bab2;"></div>
<div style="left:52px;top:609px;width:1px;height:16px;background:#b2bab2;"></div>
<div style="left:1508px;top:609px;width:1px;height:16px;background:#b2bab2;"></div>
<div style="left:52px;top:624px;width:1457px;height:1px;background:#b2bab2;"></div>
<div class="t" style="left:82px;top:610px;font-size:11px;line-height:14px;color:#111;font-weight:normal;"><span style="letter-spacing:0.1px">Транспортные услуги</span></div>
<div class="t" style="left:291px;top:610px;width:87px;font-size:11px;line-height:14px;color:#111;font-weight:normal;text-align:right;"><span style="letter-spacing:-0.05px">1</span></div>
<div class="t" style="left:383px;top:610px;font-size:11px;line-height:14px;color:#111;font-weight:normal;"><span style="letter-spacing:0px"></span></div>
<div class="t" style="left:529px;top:610px;width:143px;font-size:11px;line-height:14px;color:#111;font-weight:normal;text-align:right;"><span style="letter-spacing:-0.05px">4 000,00</span></div>
<div class="t" style="left:676px;top:610px;width:87px;font-size:11px;line-height:14px;color:#111;font-weight:normal;text-align:right;"><span style="letter-spacing:-0.05px">4 000,00</span></div>
<div style="left:53px;top:625px;width:1455px;height:28px;background:#eef3ec;"></div>
<div style="left:290px;top:624px;width:1px;height:30px;background:#b2bab2;"></div>
<div style="left:381px;top:624px;width:1px;height:30px;background:#b2bab2;"></div>
<div style="left:528px;top:624px;width:1px;height:30px;background:#b2bab2;"></div>
<div style="left:675px;top:624px;width:1px;height:30px;background:#b2bab2;"></div>
<div style="left:766px;top:624px;width:1px;height:30px;background:#b2bab2;"></div>
<div style="left:899px;top:624px;width:1px;height:30px;background:#b2bab2;"></div>
<div style="left:1032px;top:624px;width:1px;height:30px;background:#b2bab2;"></div>
<div style="left:1165px;top:624px;width:1px;height:30px;background:#b2bab2;"></div>
<div style="left:1270px;top:624px;width:1px;height:30px;background:#b2bab2;"></div>
<div style="left:1361px;top:624px;width:1px;height:30px;background:#b2bab2;"></div>
<div style="left:52px;top:624px;width:1px;height:30px;background:#b2bab2;"></div>
<div style="left:1508px;top:624px;width:1px;height:30px;background:#b2bab2;"></div>
<div style="left:52px;top:653px;width:1457px;height:1px;background:#b2bab2;"></div>
<div class="t" style="left:69px;top:625px;font-size:11px;line-height:14px;color:#003822;font-weight:bold;"><span style="letter-spacing:0.15px">Поступление товаров и услуг</span>
<span style="letter-spacing:-0.13px">XPC00003813 от 02.12.2015 13:38:26</span></div>
<div class="t" style="left:293px;top:625px;font-size:11px;line-height:14px;color:#003822;font-weight:bold;"><span style="letter-spacing:-0.13px">02.12.2015</span></div>
<div class="t" style="left:384px;top:625px;font-size:11px;line-height:14px;color:#003822;font-weight:bold;"><span style="letter-spacing:0.15px">ТК ИМПУЛЬС</span></div>
<div class="t" style="left:531px;top:625px;font-size:11px;line-height:14px;color:#003822;font-weight:bold;"><span style="letter-spacing:0.15px">Новый Ярославль</span></div>
<div class="t" style="left:676px;top:625px;width:87px;font-size:11px;line-height:14px;color:#003822;font-weight:bold;text-align:right;"><span style="letter-spacing:-0.13px">5 892,00</span></div>
<div class="t" style="left:902px;top:625px;font-size:11px;line-height:14px;color:#003822;font-weight:bold;"><span style="letter-spacing:0.15px">Объект Новый</span>
<span style="letter-spacing:0.15px">Ярославль</span></div>
<div class="t" style="left:1035px;top:625px;font-size:11px;line-height:14px;color:#003822;font-weight:bold;"><span style="letter-spacing:0.15px">Высоцкий Сергей</span></div>
<div class="t" style="left:1168px;top:625px;font-size:11px;line-height:14px;color:#003822;font-weight:bold;"><span style="letter-spacing:-0.13px">2144</span></div>
<div class="t" style="left:1273px;top:625px;font-size:11px;line-height:14px;color:#003822;font-weight:bold;"><span style="letter-spacing:-0.13px">30.11.2015</span></div>
<div style="left:290px;top:653px;width:1px;height:16px;background:#b2bab2;"></div>
<div style="left:381px;top:653px;width:1px;height:16px;background:#b2bab2;"></div>
<div style="left:528px;top:653px;width:1px;height:16px;background:#b2bab2;"></div>
<div style="left:675px;top:653px;width:1px;height:16px;background:#b2bab2;"></div>
<div style="left:52px;top:653px;width:1px;height:16px;background:#b2bab2;"></div>
<div style="left:1508px;top:653px;width:1px;height:16px;background:#b2bab2;"></div>
<div style="left:52px;top:668px;width:1457px;height:1px;background:#b2bab2;"></div>
<div class="t" style="left:82px;top:654px;font-size:11px;line-height:14px;color:#111;font-weight:normal;"><span style="letter-spacing:0.1px">Валик  полиэстер</span></div>
<div class="t" style="left:291px;top:654px;width:87px;font-size:11px;line-height:14px;color:#111;font-weight:normal;text-align:right;"><span style="letter-spacing:-0.05px">10</span></div>
<div class="t" style="left:383px;top:654px;font-size:11px;line-height:14px;color:#111;font-weight:normal;"><span style="letter-spacing:0.1px">шт</span></div>
<div class="t" style="left:529px;top:654px;width:143px;font-size:11px;line-height:14px;color:#111;font-weight:normal;text-align:right;"><span style="letter-spacing:-0.05px">91,47</span></div>
<div class="t" style="left:676px;top:654px;width:87px;font-size:11px;line-height:14px;color:#111;font-weight:normal;text-align:right;"><span style="letter-spacing:-0.05px">914,70</span></div>
<div style="left:290px;top:668px;width:1px;height:16px;background:#b2bab2;"></div>
<div style="left:381px;top:668px;width:1px;height:16px;background:#b2bab2;"></div>
<div style="left:528px;top:668px;width:1px;height:16px;background:#b2bab2;"></div>
<div style="left:675px;top:668px;width:1px;height:16px;background:#b2bab2;"></div>
<div style="left:52px;top:668px;width:1px;height:16px;background:#b2bab2;"></div>
<div style="left:1508px;top:668px;width:1px;height:16px;background:#b2bab2;"></div>
<div style="left:52px;top:683px;width:1457px;height:1px;background:#b2bab2;"></div>
<div class="t" style="left:82px;top:669px;font-size:11px;line-height:14px;color:#111;font-weight:normal;"><span style="letter-spacing:0.1px">Ведро оцинкованное</span></div>
<div class="t" style="left:291px;top:669px;width:87px;font-size:11px;line-height:14px;color:#111;font-weight:normal;text-align:right;"><span style="letter-spacing:-0.05px">10</span></div>
<div class="t" style="left:383px;top:669px;font-size:11px;line-height:14px;color:#111;font-weight:normal;"><span style="letter-spacing:0.1px">шт</span></div>
<div class="t" style="left:529px;top:669px;width:143px;font-size:11px;line-height:14px;color:#111;font-weight:normal;text-align:right;"><span style="letter-spacing:-0.05px">166,26</span></div>
<div class="t" style="left:676px;top:669px;width:87px;font-size:11px;line-height:14px;color:#111;font-weight:normal;text-align:right;"><span style="letter-spacing:-0.05px">1 662,57</span></div>
<div style="left:290px;top:683px;width:1px;height:16px;background:#b2bab2;"></div>
<div style="left:381px;top:683px;width:1px;height:16px;background:#b2bab2;"></div>
<div style="left:528px;top:683px;width:1px;height:16px;background:#b2bab2;"></div>
<div style="left:675px;top:683px;width:1px;height:16px;background:#b2bab2;"></div>
<div style="left:52px;top:683px;width:1px;height:16px;background:#b2bab2;"></div>
<div style="left:1508px;top:683px;width:1px;height:16px;background:#b2bab2;"></div>
<div style="left:52px;top:698px;width:1457px;height:1px;background:#b2bab2;"></div>
<div class="t" style="left:82px;top:684px;font-size:11px;line-height:14px;color:#111;font-weight:normal;"><span style="letter-spacing:0.1px">Ключ для патрона</span></div>
<div class="t" style="left:291px;top:684px;width:87px;font-size:11px;line-height:14px;color:#111;font-weight:normal;text-align:right;"><span style="letter-spacing:-0.05px">1</span></div>
<div class="t" style="left:383px;top:684px;font-size:11px;line-height:14px;color:#111;font-weight:normal;"><span style="letter-spacing:0.1px">шт</span></div>
<div class="t" style="left:529px;top:684px;width:143px;font-size:11px;line-height:14px;color:#111;font-weight:normal;text-align:right;"><span style="letter-spacing:-0.05px">98,44</span></div>
<div class="t" style="left:676px;top:684px;width:87px;font-size:11px;line-height:14px;color:#111;font-weight:normal;text-align:right;"><span style="letter-spacing:-0.05px">98,44</span></div>
<div style="left:290px;top:698px;width:1px;height:16px;background:#b2bab2;"></div>
<div style="left:381px;top:698px;width:1px;height:16px;background:#b2bab2;"></div>
<div style="left:528px;top:698px;width:1px;height:16px;background:#b2bab2;"></div>
<div style="left:675px;top:698px;width:1px;height:16px;background:#b2bab2;"></div>
<div style="left:52px;top:698px;width:1px;height:16px;background:#b2bab2;"></div>
<div style="left:1508px;top:698px;width:1px;height:16px;background:#b2bab2;"></div>
<div style="left:52px;top:713px;width:1457px;height:1px;background:#b2bab2;"></div>
<div class="t" style="left:82px;top:699px;font-size:11px;line-height:14px;color:#111;font-weight:normal;"><span style="letter-spacing:0.1px">Мешок д/строит.мусора</span></div>
<div class="t" style="left:291px;top:699px;width:87px;font-size:11px;line-height:14px;color:#111;font-weight:normal;text-align:right;"><span style="letter-spacing:-0.05px">30</span></div>
<div class="t" style="left:383px;top:699px;font-size:11px;line-height:14px;color:#111;font-weight:normal;"><span style="letter-spacing:0.1px">шт</span></div>
<div class="t" style="left:529px;top:699px;width:143px;font-size:11px;line-height:14px;color:#111;font-weight:normal;text-align:right;"><span style="letter-spacing:-0.05px">9,47</span></div>
<div class="t" style="left:676px;top:699px;width:87px;font-size:11px;line-height:14px;color:#111;font-weight:normal;text-align:right;"><span style="letter-spacing:-0.05px">284,03</span></div>
<div style="left:290px;top:713px;width:1px;height:16px;background:#b2bab2;"></div>
<div style="left:381px;top:713px;width:1px;height:16px;background:#b2bab2;"></div>
<div style="left:528px;top:713px;width:1px;height:16px;background:#b2bab2;"></div>
<div style="left:675px;top:713px;width:1px;height:16px;background:#b2bab2;"></div>
<div style="left:52px;top:713px;width:1px;height:16px;background:#b2bab2;"></div>
<div style="left:1508px;top:713px;width:1px;height:16px;background:#b2bab2;"></div>
<div style="left:52px;top:728px;width:1457px;height:1px;background:#b2bab2;"></div>
<div class="t" style="left:82px;top:714px;font-size:11px;line-height:14px;color:#111;font-weight:normal;"><span style="letter-spacing:0.1px">Пена монтажная</span></div>
<div class="t" style="left:291px;top:714px;width:87px;font-size:11px;line-height:14px;color:#111;font-weight:normal;text-align:right;"><span style="letter-spacing:-0.05px">3</span></div>
<div class="t" style="left:383px;top:714px;font-size:11px;line-height:14px;color:#111;font-weight:normal;"><span style="letter-spacing:0.1px">шт</span></div>
<div class="t" style="left:529px;top:714px;width:143px;font-size:11px;line-height:14px;color:#111;font-weight:normal;text-align:right;"><span style="letter-spacing:-0.05px">248,00</span></div>
<div class="t" style="left:676px;top:714px;width:87px;font-size:11px;line-height:14px;color:#111;font-weight:normal;text-align:right;"><span style="letter-spacing:-0.05px">744,00</span></div>
<div style="left:290px;top:728px;width:1px;height:16px;background:#b2bab2;"></div>
<div style="left:381px;top:728px;width:1px;height:16px;background:#b2bab2;"></div>
<div style="left:528px;top:728px;width:1px;height:16px;background:#b2bab2;"></div>
<div style="left:675px;top:728px;width:1px;height:16px;background:#b2bab2;"></div>
<div style="left:52px;top:728px;width:1px;height:16px;background:#b2bab2;"></div>
<div style="left:1508px;top:728px;width:1px;height:16px;background:#b2bab2;"></div>
<div style="left:52px;top:743px;width:1457px;height:1px;background:#b2bab2;"></div>
<div class="t" style="left:82px;top:729px;font-size:11px;line-height:14px;color:#111;font-weight:normal;"><span style="letter-spacing:0.1px">Перчатки двойной обливки</span></div>
<div class="t" style="left:291px;top:729px;width:87px;font-size:11px;line-height:14px;color:#111;font-weight:normal;text-align:right;"><span style="letter-spacing:-0.05px">100</span></div>
<div class="t" style="left:383px;top:729px;font-size:11px;line-height:14px;color:#111;font-weight:normal;"><span style="letter-spacing:0.1px">шт</span></div>
<div class="t" style="left:529px;top:729px;width:143px;font-size:11px;line-height:14px;color:#111;font-weight:normal;text-align:right;"><span style="letter-spacing:-0.05px">20,65</span></div>
<div class="t" style="left:676px;top:729px;width:87px;font-size:11px;line-height:14px;color:#111;font-weight:normal;text-align:right;"><span style="letter-spacing:-0.05px">2 065,00</span></div>
<div style="left:290px;top:743px;width:1px;height:16px;background:#b2bab2;"></div>
<div style="left:381px;top:743px;width:1px;height:16px;background:#b2bab2;"></div>
<div style="left:528px;top:743px;width:1px;height:16px;background:#b2bab2;"></div>
<div style="left:675px;top:743px;width:1px;height:16px;background:#b2bab2;"></div>
<div style="left:52px;top:743px;width:1px;height:16px;background:#b2bab2;"></div>
<div style="left:1508px;top:743px;width:1px;height:16px;background:#b2bab2;"></div>
<div style="left:52px;top:758px;width:1457px;height:1px;background:#b2bab2;"></div>
<div class="t" style="left:82px;top:744px;font-size:11px;line-height:14px;color:#111;font-weight:normal;"><span style="letter-spacing:0.1px">Уайт-спирит</span></div>
<div class="t" style="left:291px;top:744px;width:87px;font-size:11px;line-height:14px;color:#111;font-weight:normal;text-align:right;"><span style="letter-spacing:-0.05px">2</span></div>
<div class="t" style="left:383px;top:744px;font-size:11px;line-height:14px;color:#111;font-weight:normal;"><span style="letter-spacing:0.1px">л</span></div>
<div class="t" style="left:529px;top:744px;width:143px;font-size:11px;line-height:14px;color:#111;font-weight:normal;text-align:right;"><span style="letter-spacing:-0.05px">61,63</span></div>
<div class="t" style="left:676px;top:744px;width:87px;font-size:11px;line-height:14px;color:#111;font-weight:normal;text-align:right;"><span style="letter-spacing:-0.05px">123,26</span></div>
<div style="left:53px;top:759px;width:1455px;height:28px;background:#eef3ec;"></div>
<div style="left:290px;top:758px;width:1px;height:30px;background:#b2bab2;"></div>
<div style="left:381px;top:758px;width:1px;height:30px;background:#b2bab2;"></div>
<div style="left:528px;top:758px;width:1px;height:30px;background:#b2bab2;"></div>
<div style="left:675px;top:758px;width:1px;height:30px;background:#b2bab2;"></div>
<div style="left:766px;top:758px;width:1px;height:30px;background:#b2bab2;"></div>
<div style="left:899px;top:758px;width:1px;height:30px;background:#b2bab2;"></div>
<div style="left:1032px;top:758px;width:1px;height:30px;background:#b2bab2;"></div>
<div style="left:1165px;top:758px;width:1px;height:30px;background:#b2bab2;"></div>
<div style="left:1270px;top:758px;width:1px;height:30px;background:#b2bab2;"></div>
<div style="left:1361px;top:758px;width:1px;height:30px;background:#b2bab2;"></div>
<div style="left:52px;top:758px;width:1px;height:30px;background:#b2bab2;"></div>
<div style="left:1508px;top:758px;width:1px;height:30px;background:#b2bab2;"></div>
<div style="left:52px;top:787px;width:1457px;height:1px;background:#b2bab2;"></div>
<div class="t" style="left:69px;top:759px;font-size:11px;line-height:14px;color:#003822;font-weight:bold;"><span style="letter-spacing:0.15px">Поступление товаров и услуг</span>
<span style="letter-spacing:-0.13px">XPC00003814 от 02.12.2015 13:40:49</span></div>
<div class="t" style="left:293px;top:759px;font-size:11px;line-height:14px;color:#003822;font-weight:bold;"><span style="letter-spacing:-0.13px">02.12.2015</span></div>
<div class="t" style="left:384px;top:759px;font-size:11px;line-height:14px;color:#003822;font-weight:bold;"><span style="letter-spacing:0.15px">Регион-инструмент</span></div>
<div class="t" style="left:531px;top:759px;font-size:11px;line-height:14px;color:#003822;font-weight:bold;"><span style="letter-spacing:0.15px">Новый Ярославль</span></div>
<div class="t" style="left:676px;top:759px;width:87px;font-size:11px;line-height:14px;color:#003822;font-weight:bold;text-align:right;"><span style="letter-spacing:-0.13px">1 717,00</span></div>
<div class="t" style="left:902px;top:759px;font-size:11px;line-height:14px;color:#003822;font-weight:bold;"><span style="letter-spacing:0.15px">Объект Новый</span>
<span style="letter-spacing:0.15px">Ярославль</span></div>
<div class="t" style="left:1035px;top:759px;font-size:11px;line-height:14px;color:#003822;font-weight:bold;"><span style="letter-spacing:0.15px">Светалкин Алексей</span></div>
<div class="t" style="left:1168px;top:759px;font-size:11px;line-height:14px;color:#003822;font-weight:bold;"><span style="letter-spacing:-0.13px">р000002643</span></div>
<div class="t" style="left:1273px;top:759px;font-size:11px;line-height:14px;color:#003822;font-weight:bold;"><span style="letter-spacing:-0.13px">02.12.2015</span></div>
<div style="left:290px;top:787px;width:1px;height:16px;background:#b2bab2;"></div>
<div style="left:381px;top:787px;width:1px;height:16px;background:#b2bab2;"></div>
<div style="left:528px;top:787px;width:1px;height:16px;background:#b2bab2;"></div>
<div style="left:675px;top:787px;width:1px;height:16px;background:#b2bab2;"></div>
<div style="left:52px;top:787px;width:1px;height:16px;background:#b2bab2;"></div>
<div style="left:1508px;top:787px;width:1px;height:16px;background:#b2bab2;"></div>
<div style="left:52px;top:802px;width:1457px;height:1px;background:#b2bab2;"></div>
<div class="t" style="left:82px;top:788px;font-size:11px;line-height:14px;color:#111;font-weight:normal;"><span style="letter-spacing:0.1px">Напильник круглый</span></div>
<div class="t" style="left:291px;top:788px;width:87px;font-size:11px;line-height:14px;color:#111;font-weight:normal;text-align:right;"><span style="letter-spacing:-0.05px">4</span></div>
<div class="t" style="left:383px;top:788px;font-size:11px;line-height:14px;color:#111;font-weight:normal;"><span style="letter-spacing:0.1px">шт</span></div>
<div class="t" style="left:529px;top:788px;width:143px;font-size:11px;line-height:14px;color:#111;font-weight:normal;text-align:right;"><span style="letter-spacing:-0.05px">54,75</span></div>
<div class="t" style="left:676px;top:788px;width:87px;font-size:11px;line-height:14px;color:#111;font-weight:normal;text-align:right;"><span style="letter-spacing:-0.05px">219,00</span></div>
<div style="left:290px;top:802px;width:1px;height:16px;background:#b2bab2;"></div>
<div style="left:381px;top:802px;width:1px;height:16px;background:#b2bab2;"></div>
<div style="left:528px;top:802px;width:1px;height:16px;background:#b2bab2;"></div>
<div style="left:675px;top:802px;width:1px;height:16px;background:#b2bab2;"></div>
<div style="left:52px;top:802px;width:1px;height:16px;background:#b2bab2;"></div>
<div style="left:1508px;top:802px;width:1px;height:16px;background:#b2bab2;"></div>
<div style="left:52px;top:817px;width:1457px;height:1px;background:#b2bab2;"></div>
<div class="t" style="left:82px;top:803px;font-size:11px;line-height:14px;color:#111;font-weight:normal;"><span style="letter-spacing:0.1px">Цепь д/пилы</span></div>
<div class="t" style="left:291px;top:803px;width:87px;font-size:11px;line-height:14px;color:#111;font-weight:normal;text-align:right;"><span style="letter-spacing:-0.05px">2</span></div>
<div class="t" style="left:383px;top:803px;font-size:11px;line-height:14px;color:#111;font-weight:normal;"><span style="letter-spacing:0.1px">шт</span></div>
<div class="t" style="left:529px;top:803px;width:143px;font-size:11px;line-height:14px;color:#111;font-weight:normal;text-align:right;"><span style="letter-spacing:-0.05px">500,00</span></div>
<div class="t" style="left:676px;top:803px;width:87px;font-size:11px;line-height:14px;color:#111;font-weight:normal;text-align:right;"><span style="letter-spacing:-0.05px">1 000,00</span></div>
<div style="left:290px;top:817px;width:1px;height:16px;background:#b2bab2;"></div>
<div style="left:381px;top:817px;width:1px;height:16px;background:#b2bab2;"></div>
<div style="left:528px;top:817px;width:1px;height:16px;background:#b2bab2;"></div>
<div style="left:675px;top:817px;width:1px;height:16px;background:#b2bab2;"></div>
<div style="left:52px;top:817px;width:1px;height:16px;background:#b2bab2;"></div>
<div style="left:1508px;top:817px;width:1px;height:16px;background:#b2bab2;"></div>
<div style="left:52px;top:832px;width:1457px;height:1px;background:#b2bab2;"></div>
<div class="t" style="left:82px;top:818px;font-size:11px;line-height:14px;color:#111;font-weight:normal;"><span style="letter-spacing:0.1px">Электроды</span></div>
<div class="t" style="left:291px;top:818px;width:87px;font-size:11px;line-height:14px;color:#111;font-weight:normal;text-align:right;"><span style="letter-spacing:-0.05px">6</span></div>
<div class="t" style="left:383px;top:818px;font-size:11px;line-height:14px;color:#111;font-weight:normal;"><span style="letter-spacing:0.1px">кг</span></div>
<div class="t" style="left:529px;top:818px;width:143px;font-size:11px;line-height:14px;color:#111;font-weight:normal;text-align:right;"><span style="letter-spacing:-0.05px">83,00</span></div>
<div class="t" style="left:676px;top:818px;width:87px;font-size:11px;line-height:14px;color:#111;font-weight:normal;text-align:right;"><span style="letter-spacing:-0.05px">498,00</span></div>
<div style="left:53px;top:833px;width:1455px;height:28px;background:#eef3ec;"></div>
<div style="left:290px;top:832px;width:1px;height:30px;background:#b2bab2;"></div>
<div style="left:381px;top:832px;width:1px;height:30px;background:#b2bab2;"></div>
<div style="left:528px;top:832px;width:1px;height:30px;background:#b2bab2;"></div>
<div style="left:675px;top:832px;width:1px;height:30px;background:#b2bab2;"></div>
<div style="left:766px;top:832px;width:1px;height:30px;background:#b2bab2;"></div>
<div style="left:899px;top:832px;width:1px;height:30px;background:#b2bab2;"></div>
<div style="left:1032px;top:832px;width:1px;height:30px;background:#b2bab2;"></div>
<div style="left:1165px;top:832px;width:1px;height:30px;background:#b2bab2;"></div>
<div style="left:1270px;top:832px;width:1px;height:30px;background:#b2bab2;"></div>
<div style="left:1361px;top:832px;width:1px;height:30px;background:#b2bab2;"></div>
<div style="left:52px;top:832px;width:1px;height:30px;background:#b2bab2;"></div>
<div style="left:1508px;top:832px;width:1px;height:30px;background:#b2bab2;"></div>
<div style="left:52px;top:861px;width:1457px;height:1px;background:#b2bab2;"></div>
<div class="t" style="left:69px;top:833px;font-size:11px;line-height:14px;color:#003822;font-weight:bold;"><span style="letter-spacing:0.15px">Поступление товаров и услуг</span>
<span style="letter-spacing:-0.13px">XPC00003831 от 02.12.2015 16:43:10</span></div>
<div class="t" style="left:293px;top:833px;font-size:11px;line-height:14px;color:#003822;font-weight:bold;"><span style="letter-spacing:-0.13px">02.12.2015</span></div>
<div class="t" style="left:384px;top:833px;font-size:11px;line-height:14px;color:#003822;font-weight:bold;"><span style="letter-spacing:0.15px">ПТО-сервис</span></div>
<div class="t" style="left:531px;top:833px;font-size:11px;line-height:14px;color:#003822;font-weight:bold;"><span style="letter-spacing:0.15px">Ярославль ЖК Зеленый</span>
<span style="letter-spacing:0.15px">квартал</span></div>
<div class="t" style="left:676px;top:833px;width:87px;font-size:11px;line-height:14px;color:#003822;font-weight:bold;text-align:right;"><span style="letter-spacing:-0.13px">21 380,00</span></div>
<div class="t" style="left:902px;top:833px;font-size:11px;line-height:14px;color:#003822;font-weight:bold;"><span style="letter-spacing:0.15px">Объект ЖК Зеленый</span>
<span style="letter-spacing:0.15px">квартал Ярославль</span></div>
<div class="t" style="left:1035px;top:833px;font-size:11px;line-height:14px;color:#003822;font-weight:bold;"><span style="letter-spacing:0.15px">Чернышов Харлам</span></div>
<div class="t" style="left:1168px;top:833px;font-size:11px;line-height:14px;color:#003822;font-weight:bold;"><span style="letter-spacing:-0.13px">000450</span></div>
<div class="t" style="left:1273px;top:833px;font-size:11px;line-height:14px;color:#003822;font-weight:bold;"><span style="letter-spacing:-0.13px">02.12.2015</span></div>
<div style="left:290px;top:861px;width:1px;height:30px;background:#b2bab2;"></div>
<div style="left:381px;top:861px;width:1px;height:30px;background:#b2bab2;"></div>
<div style="left:528px;top:861px;width:1px;height:30px;background:#b2bab2;"></div>
<div style="left:675px;top:861px;width:1px;height:30px;background:#b2bab2;"></div>
<div style="left:52px;top:861px;width:1px;height:30px;background:#b2bab2;"></div>
<div style="left:1508px;top:861px;width:1px;height:30px;background:#b2bab2;"></div>
<div style="left:52px;top:890px;width:1457px;height:1px;background:#b2bab2;"></div>
<div class="t" style="left:82px;top:862px;font-size:11px;line-height:14px;color:#111;font-weight:normal;"><span style="letter-spacing:0.1px">Ремонт и запчасти основного</span>
<span style="letter-spacing:0.1px">оборудования</span></div>
<div class="t" style="left:291px;top:862px;width:87px;font-size:11px;line-height:14px;color:#111;font-weight:normal;text-align:right;"><span style="letter-spacing:-0.05px">1</span></div>
<div class="t" style="left:383px;top:862px;font-size:11px;line-height:14px;color:#111;font-weight:normal;"><span style="letter-spacing:0px"></span></div>
<div class="t" style="left:529px;top:862px;width:143px;font-size:11px;line-height:14px;color:#111;font-weight:normal;text-align:right;"><span style="letter-spacing:-0.05px">21 380,00</span></div>
<div class="t" style="left:676px;top:862px;width:87px;font-size:11px;line-height:14px;color:#111;font-weight:normal;text-align:right;"><span style="letter-spacing:-0.05px">21 380,00</span></div>
<div style="left:53px;top:891px;width:1455px;height:28px;background:#eef3ec;"></div>
<div style="left:290px;top:890px;width:1px;height:30px;background:#b2bab2;"></div>
<div style="left:381px;top:890px;width:1px;height:30px;background:#b2bab2;"></div>
<div style="left:528px;top:890px;width:1px;height:30px;background:#b2bab2;"></div>
<div style="left:675px;top:890px;width:1px;height:30px;background:#b2bab2;"></div>
<div style="left:766px;top:890px;width:1px;height:30px;background:#b2bab2;"></div>
<div style="left:899px;top:890px;width:1px;height:30px;background:#b2bab2;"></div>
<div style="left:1032px;top:890px;width:1px;height:30px;background:#b2bab2;"></div>
<div style="left:1165px;top:890px;width:1px;height:30px;background:#b2bab2;"></div>
<div style="left:1270px;top:890px;width:1px;height:30px;background:#b2bab2;"></div>
<div style="left:1361px;top:890px;width:1px;height:30px;background:#b2bab2;"></div>
<div style="left:52px;top:890px;width:1px;height:30px;background:#b2bab2;"></div>
<div style="left:1508px;top:890px;width:1px;height:30px;background:#b2bab2;"></div>
<div style="left:52px;top:919px;width:1457px;height:1px;background:#b2bab2;"></div>
<div class="t" style="left:69px;top:891px;font-size:11px;line-height:14px;color:#003822;font-weight:bold;"><span style="letter-spacing:0.15px">Поступление товаров и услуг</span>
<span style="letter-spacing:-0.13px">XPC00003838 от 03.12.2015 9:38:23</span></div>
<div class="t" style="left:293px;top:891px;font-size:11px;line-height:14px;color:#003822;font-weight:bold;"><span style="letter-spacing:-0.13px">03.12.2015</span></div>
<div class="t" style="left:384px;top:891px;font-size:11px;line-height:14px;color:#003822;font-weight:bold;"><span style="letter-spacing:0.15px">Инвестпоставка</span></div>
<div class="t" style="left:531px;top:891px;font-size:11px;line-height:14px;color:#003822;font-weight:bold;"><span style="letter-spacing:0.15px">Ярославль ЖК Зеленый</span>
<span style="letter-spacing:0.15px">квартал</span></div>
<div class="t" style="left:676px;top:891px;width:87px;font-size:11px;line-height:14px;color:#003822;font-weight:bold;text-align:right;"><span style="letter-spacing:-0.13px">26 832,00</span></div>
<div class="t" style="left:902px;top:891px;font-size:11px;line-height:14px;color:#003822;font-weight:bold;"><span style="letter-spacing:0.15px">Объект ЖК Зеленый</span>
<span style="letter-spacing:0.15px">квартал Ярославль</span></div>
<div class="t" style="left:1035px;top:891px;font-size:11px;line-height:14px;color:#003822;font-weight:bold;"><span style="letter-spacing:0.15px">Чернышов Харлам</span></div>
<div class="t" style="left:1168px;top:891px;font-size:11px;line-height:14px;color:#003822;font-weight:bold;"><span style="letter-spacing:-0.13px">120302</span></div>
<div class="t" style="left:1273px;top:891px;font-size:11px;line-height:14px;color:#003822;font-weight:bold;"><span style="letter-spacing:-0.13px">03.12.2015</span></div>
<div style="left:290px;top:919px;width:1px;height:16px;background:#b2bab2;"></div>
<div style="left:381px;top:919px;width:1px;height:16px;background:#b2bab2;"></div>
<div style="left:528px;top:919px;width:1px;height:16px;background:#b2bab2;"></div>
<div style="left:675px;top:919px;width:1px;height:16px;background:#b2bab2;"></div>
<div style="left:52px;top:919px;width:1px;height:16px;background:#b2bab2;"></div>
<div style="left:1508px;top:919px;width:1px;height:16px;background:#b2bab2;"></div>
<div style="left:52px;top:934px;width:1457px;height:1px;background:#b2bab2;"></div>
<div class="t" style="left:82px;top:920px;font-size:11px;line-height:14px;color:#111;font-weight:normal;"><span style="letter-spacing:-0.05px">Круг 14 мм.</span></div>
<div class="t" style="left:291px;top:920px;width:87px;font-size:11px;line-height:14px;color:#111;font-weight:normal;text-align:right;"><span style="letter-spacing:-0.05px">0,84</span></div>
<div class="t" style="left:383px;top:920px;font-size:11px;line-height:14px;color:#111;font-weight:normal;"><span style="letter-spacing:0.1px">т</span></div>
<div class="t" style="left:529px;top:920px;width:143px;font-size:11px;line-height:14px;color:#111;font-weight:normal;text-align:right;"><span style="letter-spacing:-0.05px">27 300,00</span></div>
<div class="t" style="left:676px;top:920px;width:87px;font-size:11px;line-height:14px;color:#111;font-weight:normal;text-align:right;"><span style="letter-spacing:-0.05px">22 932,00</span></div>
<div style="left:290px;top:934px;width:1px;height:16px;background:#b2bab2;"></div>
<div style="left:381px;top:934px;width:1px;height:16px;background:#b2bab2;"></div>
<div style="left:528px;top:934px;width:1px;height:16px;background:#b2bab2;"></div>
<div style="left:675px;top:934px;width:1px;height:16px;background:#b2bab2;"></div>
<div style="left:52px;top:934px;width:1px;height:16px;background:#b2bab2;"></div>
<div style="left:1508px;top:934px;width:1px;height:16px;background:#b2bab2;"></div>
<div style="left:52px;top:949px;width:1457px;height:1px;background:#b2bab2;"></div>
<div class="t" style="left:82px;top:935px;font-size:11px;line-height:14px;color:#111;font-weight:normal;"><span style="letter-spacing:0.1px">Транспортные услуги</span></div>
<div class="t" style="left:291px;top:935px;width:87px;font-size:11px;line-height:14px;color:#111;font-weight:normal;text-align:right;"><span style="letter-spacing:-0.05px">1</span></div>
<div class="t" style="left:383px;top:935px;font-size:11px;line-height:14px;color:#111;font-weight:normal;"><span style="letter-spacing:0px"></span></div>
<div class="t" style="left:529px;top:935px;width:143px;font-size:11px;line-height:14px;color:#111;font-weight:normal;text-align:right;"><span style="letter-spacing:-0.05px">9 600,00</span></div>
<div class="t" style="left:676px;top:935px;width:87px;font-size:11px;line-height:14px;color:#111;font-weight:normal;text-align:right;"><span style="letter-spacing:-0.05px">9 600,00</span></div>
</div>
<div style="left:14px;top:376px;width:11px;height:11px;background:#fdfbf4;border:1px solid #9a9888;"></div>
<div style="left:16px;top:381px;width:7px;height:1px;background:#222;"></div>
<div style="left:19px;top:387px;width:1px;height:553px;background:#a8a490;"></div>
<div style="left:27px;top:406px;width:11px;height:11px;background:#fdfbf4;border:1px solid #9a9888;"></div>
<div style="left:29px;top:411px;width:7px;height:1px;background:#222;"></div>
<div style="left:32px;top:417px;width:1px;height:46px;background:#a8a490;"></div>
<div style="left:32px;top:462px;width:5px;height:1px;background:#a8a490;"></div>
<div style="left:27px;top:472px;width:11px;height:11px;background:#fdfbf4;border:1px solid #9a9888;"></div>
<div style="left:29px;top:477px;width:7px;height:1px;background:#222;"></div>
<div style="left:32px;top:483px;width:1px;height:54px;background:#a8a490;"></div>
<div style="left:32px;top:536px;width:5px;height:1px;background:#a8a490;"></div>
<div style="left:27px;top:546px;width:11px;height:11px;background:#fdfbf4;border:1px solid #9a9888;"></div>
<div style="left:29px;top:551px;width:7px;height:1px;background:#222;"></div>
<div style="left:32px;top:557px;width:1px;height:24px;background:#a8a490;"></div>
<div style="left:32px;top:580px;width:5px;height:1px;background:#a8a490;"></div>
<div style="left:27px;top:590px;width:11px;height:11px;background:#fdfbf4;border:1px solid #9a9888;"></div>
<div style="left:29px;top:595px;width:7px;height:1px;background:#222;"></div>
<div style="left:32px;top:601px;width:1px;height:24px;background:#a8a490;"></div>
<div style="left:32px;top:624px;width:5px;height:1px;background:#a8a490;"></div>
<div style="left:27px;top:634px;width:11px;height:11px;background:#fdfbf4;border:1px solid #9a9888;"></div>
<div style="left:29px;top:639px;width:7px;height:1px;background:#222;"></div>
<div style="left:32px;top:645px;width:1px;height:114px;background:#a8a490;"></div>
<div style="left:32px;top:758px;width:5px;height:1px;background:#a8a490;"></div>
<div style="left:27px;top:768px;width:11px;height:11px;background:#fdfbf4;border:1px solid #9a9888;"></div>
<div style="left:29px;top:773px;width:7px;height:1px;background:#222;"></div>
<div style="left:32px;top:779px;width:1px;height:54px;background:#a8a490;"></div>
<div style="left:32px;top:832px;width:5px;height:1px;background:#a8a490;"></div>
<div style="left:27px;top:842px;width:11px;height:11px;background:#fdfbf4;border:1px solid #9a9888;"></div>
<div style="left:29px;top:847px;width:7px;height:1px;background:#222;"></div>
<div style="left:32px;top:853px;width:1px;height:38px;background:#a8a490;"></div>
<div style="left:32px;top:890px;width:5px;height:1px;background:#a8a490;"></div>
<div style="left:27px;top:900px;width:11px;height:11px;background:#fdfbf4;border:1px solid #9a9888;"></div>
<div style="left:29px;top:905px;width:7px;height:1px;background:#222;"></div>
<div style="left:32px;top:911px;width:1px;height:30px;background:#a8a490;"></div>
<div style="left:1653px;top:184px;width:16px;height:756px;background:#fbf8ec;border-left:1px solid #c8c4ae;"></div>
<div style="left:1653px;top:184px;width:16px;height:21px;background:linear-gradient(90deg,#f8f4e0,#ece6cc);border-left:1px solid #c8c4ae;border-bottom:1px solid #c8c4ae;"></div>
<svg style="left:1658px;top:190px" width="7" height="6"><path d="M0 6 H7 L3.5 0 Z" fill="#cac8bc"/></svg>
<div style="left:1653px;top:204px;width:16px;height:39px;background:linear-gradient(90deg,#f6f1dc,#e6dfbf);border-left:1px solid #c8c4ae;border-top:1px solid #a8a490;border-bottom:1px solid #a8a490;"></div>
<svg style="left:1659px;top:220px" width="5" height="5"><path d="M0.5 4.5 V2.5 C0.5 1 2 0.5 4 0.5" stroke="#c0bca8" stroke-width="1.4" fill="none"/></svg>
<div style="left:1653px;top:919px;width:16px;height:21px;background:linear-gradient(90deg,#f8f4e0,#ece6cc);border-left:1px solid #c8c4ae;border-top:1px solid #c8c4ae;"></div>
<svg style="left:1657px;top:927px" width="9" height="6"><path d="M0 0 H9 L4.5 6 Z" fill="#8a8880"/></svg>
<div style="left:11px;top:940px;width:1642px;height:16px;background:#fbf8ec;border-top:1px solid #c8c4ae;"></div>
<div style="left:11px;top:940px;width:21px;height:16px;background:linear-gradient(#f8f4e0,#ece6cc);border-top:1px solid #c8c4ae;border-right:1px solid #c8c4ae;"></div>
<svg style="left:18px;top:945px" width="6" height="9"><path d="M6 0 V9 L0 4.5 Z" fill="#c4c2b8"/></svg>
<div style="left:32px;top:940px;width:1470px;height:16px;background:linear-gradient(#f8f4e4,#e8e0c0);border-top:1px solid #c8c4ae;border-right:1px solid #c8c4ae;"></div>
<svg style="left:764px;top:945px" width="5" height="5"><path d="M0.5 4.5 V2.5 C0.5 1 2 0.5 4 0.5" stroke="#c0bca8" stroke-width="1.4" fill="none"/></svg>
<div style="left:1632px;top:940px;width:21px;height:16px;background:linear-gradient(#f8f4e0,#ece6cc);border-top:1px solid #c8c4ae;border-left:1px solid #c8c4ae;"></div>
<svg style="left:1640px;top:944px" width="6" height="9"><path d="M0 0 V9 L6 4.5 Z" fill="#8a8880"/></svg>
<div style="left:1653px;top:940px;width:16px;height:16px;background:#fbf8ec;border-top:1px solid #c8c4ae;border-left:1px solid #c8c4ae;"></div>
<div style="left:0px;top:966px;width:1680px;height:24px;background:#f3f1df;"></div>
<div style="left:0px;top:965px;width:1680px;height:1px;background:#e6e2d0;"></div>
<div style="left:2px;top:968px;width:171px;height:20px;background:#b6b6b4;"></div>
<div style="left:174px;top:968px;width:172px;height:20px;background:#c4c3c0;"></div>
<div style="left:347px;top:968px;width:172px;height:20px;background:#b8cce4;"></div>
<svg style="left:3px;top:970px" width="17" height="17"><path d="M5 2 H11 V9 H5 Z" fill="#3a7ac8"/><path d="M2 9 H14 L15 11 H1 Z" fill="#2a5a9a"/><rect x="1" y="12" width="15" height="4" fill="#e8c050" stroke="#a88a30" stroke-width="0.6"/><circle cx="14" cy="2" r="1.2" fill="#222"/><path d="M14 2 V10" stroke="#222"/></svg>
<div class="t" style="left:20px;top:971px;font-size:11px;line-height:14px;color:#1a1a1a;font-weight:normal;text-align:left;">Рабочий стол</div>
<svg style="left:177px;top:971px" width="13" height="14"><rect x="0.5" y="0.5" width="12" height="13" fill="#f8f8f8" stroke="#6a7a8a"/><path d="M4.5 1 V13 M8.5 1 V13" stroke="#6a7a8a"/></svg>
<div class="t" style="left:194px;top:971px;font-size:11px;line-height:14px;color:#1a1a1a;font-weight:normal;text-align:left;">Дополнительные печатные...</div>
<svg style="left:351px;top:971px" width="12" height="13"><rect x="0.5" y="0.5" width="11" height="12" fill="#f4f8fc" stroke="#8a9aae"/><rect x="2.5" y="3" width="1" height="8" fill="#777"/><rect x="4" y="5" width="2" height="6" fill="#c8605a"/><rect x="7" y="6" width="2" height="5" fill="#5a9a5a"/></svg>
<div class="t" style="left:366px;top:971px;font-size:11px;line-height:14px;color:#1a1a1a;font-weight:normal;text-align:left;">Отчет  Сводный отчет опер...</div>
<div style="left:0px;top:990px;width:1680px;height:20px;background:#f3f0de;"></div>
<div class="t" style="left:5px;top:993px;font-size:11px;line-height:14px;color:#1a1a1a;font-weight:normal;text-align:left;">Для получения подсказки нажмите F1</div>
<div style="left:0px;top:989px;width:1606px;height:1px;background:#dedac6;"></div>
<div style="left:1605px;top:989px;width:1px;height:20px;background:#dcd8c4;"></div>
<div style="left:1612px;top:990px;width:29px;height:19px;border:1px solid #dcd8c4;"></div>
<div class="t" style="left:1615px;top:993px;font-size:11px;line-height:14px;color:#a09a80;font-weight:normal;text-align:left;">CAP</div>
<div style="left:1647px;top:990px;width:33px;height:19px;border:1px solid #dcd8c4;"></div>
<div class="t" style="left:1650px;top:993px;font-size:11px;line-height:14px;color:#1a1a1a;font-weight:normal;text-align:left;">NUM</div>
<div style="left:0px;top:1010px;width:1680px;height:40px;background:#62c6ea;"></div>
<div style="left:0px;top:1010px;width:1680px;height:1px;background:#2a5a70;"></div>
<div style="left:51px;top:1011px;width:1px;height:39px;background:#3a88a8;"></div>
<div style="left:110px;top:1011px;width:1px;height:39px;background:#3a88a8;"></div>
<div style="left:237px;top:1011px;width:1px;height:39px;background:#3a88a8;"></div>
<div style="left:296px;top:1011px;width:1px;height:39px;background:#3a88a8;"></div>
<div style="left:238px;top:1011px;width:58px;height:39px;background:#9adcf4;"></div>
<svg style="left:11px;top:1016px" width="28" height="28"><path d="M0 4 L12 2.3 V13 H0 Z M14 2 L28 0 V13 H14 Z M0 15 H12 V25.7 L0 24 Z M14 15 H28 V28 L14 26 Z" fill="#ffffff"/></svg>
<svg style="left:64px;top:1014px" width="34" height="32"><rect x="1" y="1" width="14" height="8" fill="#1a7ad0" stroke="#fff"/><rect x="1" y="9" width="14" height="21" fill="#1a7ad0" stroke="#fff"/><rect x="12" y="19" width="23" height="13" rx="1" fill="#7a8898" stroke="#fff" stroke-width="1.2"/><rect x="19" y="15" width="9" height="4" fill="none" stroke="#fff"/><path d="M13 24 H34" stroke="#fff"/></svg>
<svg style="left:130px;top:1018px" width="28" height="24"><path d="M5 0 H28 L23 24 H0 Z" fill="#2a6ac0" stroke="#1a4a90"/><path d="M6 5 L14 12 L5 18" stroke="#fff" stroke-width="2.2" fill="none"/><path d="M13 18 H20" stroke="#fff" stroke-width="2"/></svg>
<svg style="left:190px;top:1017px" width="32" height="28"><path d="M1 3 H12 L14 5 H31 V27 H1 Z" fill="#f0d070" stroke="#c8a040"/><rect x="3" y="7" width="26" height="6" fill="#fff4c0"/><circle cx="5" cy="2" r="1.3" fill="#3a9a3a"/><circle cx="13" cy="3" r="1.3" fill="#c84a2a"/><rect x="6" y="16" width="20" height="11" fill="#a8d0f0" stroke="#5a90c0"/><rect x="10" y="21" width="12" height="6" fill="#f0d070"/></svg>
<svg style="left:252px;top:1015px" width="30" height="30" viewBox="0 0 30 30"><defs><radialGradient id="lg2" cx="0.45" cy="0.3" r="0.75"><stop offset="0" stop-color="#fffce8"/><stop offset="0.55" stop-color="#fbeaa0"/><stop offset="1" stop-color="#eab040"/></radialGradient></defs><circle cx="15" cy="15" r="14" fill="url(#lg2)" stroke="#d8b060" stroke-width="1"/><path d="M5 10.5 L9 8.5 H11.5 V21 H8.5 V11.5 L5 13 Z" fill="#d42a10"/><path d="M24 12 C23 8.5 20 7.5 18 7.5 C14.5 7.5 12.5 10.5 12.5 14 C12.5 17.5 14.5 20.5 18 20.5 H28.5 V18 H18 C16.5 18 15.5 16 15.5 14 C15.5 12 16.5 10 18 10 C19.5 10 20.8 10.8 21.2 12.5 Z" fill="#d42a10"/></svg>
<svg style="left:1468px;top:1027px" width="8" height="5"><path d="M0 5 H8 L4 0 Z" fill="#111"/></svg>
<svg style="left:1489px;top:1022px" width="17" height="16"><path d="M1 1 V16" stroke="#222" stroke-width="1.3"/><path d="M1.5 1.5 H8 L9 3 H15 V9 H8 L7 8 H1.5 Z" fill="#fff" stroke="#222" stroke-width="1"/></svg>
<svg style="left:1513px;top:1022px" width="18" height="17"><rect x="4" y="3" width="13" height="9" fill="#ddeefa" stroke="#222"/><rect x="1" y="1" width="5" height="9" fill="#eef" stroke="#222"/><path d="M10 12 V15 M6 15.5 H14" stroke="#222"/></svg>
<svg style="left:1536px;top:1022px" width="19" height="17"><path d="M1 5 H4 L9 1 V15 L4 11 H1 Z" fill="#f4f4f4" stroke="#222"/><circle cx="13" cy="12" r="4.5" fill="#e03030" stroke="#fff"/><path d="M11 10 L15 14 M15 10 L11 14" stroke="#fff" stroke-width="1.4"/></svg>
<div class="t" style="left:1567px;top:1023px;font-size:12px;line-height:15px;color:#111;font-weight:normal;text-align:left;">ENG</div>
<div class="t" style="left:1624px;top:1015px;font-size:11.5px;line-height:15px;color:#111;font-weight:normal;text-align:left;">0:14</div>
<div style="left:1676px;top:1011px;width:1px;height:39px;background:#3a88a8;"></div>
<div class="t" style="left:1607px;top:1031px;font-size:11px;line-height:15px;color:#111;font-weight:normal;text-align:left;">06.12.2015</div>
</body></html>
